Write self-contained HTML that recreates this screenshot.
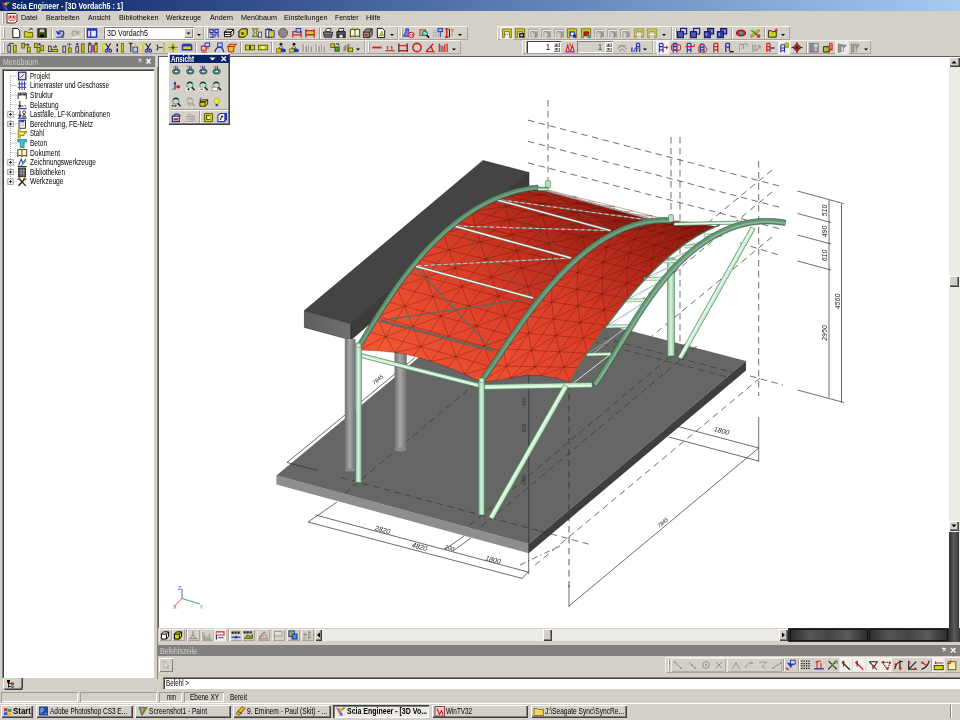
<!DOCTYPE html>
<html lang="de"><head><meta charset="utf-8"><title>Scia Engineer - [3D Vordach5 : 1]</title>
<style>
html,body{margin:0;padding:0;background:#d4d0c8;}
body{width:960px;height:720px;overflow:hidden;font-family:'Liberation Sans',sans-serif;font-size:8px;}
#screen{filter:blur(0.4px);position:relative;width:960px;height:720px;overflow:hidden;background:#d4d0c8;}
.t{position:absolute;white-space:pre;transform-origin:0 50%;line-height:1;display:inline-block;}
.raised{box-shadow:inset 1px 1px 0 #fff, inset -1px -1px 0 #808080;}
.sunken{box-shadow:inset 1px 1px 0 #808080, inset -1px -1px 0 #fff;}
.sep{position:absolute;width:1px;background:#a09c94;box-shadow:1px 0 0 #fff;}
.grip{position:absolute;width:2px;box-shadow:inset 1px 0 0 #fff, inset -1px 0 0 #a09c94;}
svg{position:absolute;overflow:visible;}
</style></head>
<body>
<div id="screen">
<div style="position:absolute;left:0px;top:0px;width:960px;height:11px;background:linear-gradient(90deg,#0a246a,#a6caf0);"></div>
<svg style="left:1px;top:1px" width="10" height="10" viewBox="0 0 10 10"><path d="M0 1l3 1 2 3z" fill="#e83020"/><path d="M3 2l4-1 -2 4z" fill="#f0c020"/><path d="M7 1l3 0-5 4z" fill="#30a030"/><path d="M5 5l-1 4 3 0z" fill="#3060e0"/><path d="M0 1l4 8 1-4z" fill="#c02080" opacity=".7"/></svg>
<span class="t" style="left:12px;top:1.7px;font-size:8.3px;font-weight:bold;color:#fff;transform:scaleX(0.855);">Scia Engineer - [3D Vordach5 : 1]</span>
<div style="position:absolute;left:0px;top:11px;width:960px;height:14px;background:#d4d0c8;"></div>
<div class="grip" style="left:2px;top:13px;height:11px"></div>
<svg style="left:6px;top:12px" width="12" height="12" viewBox="0 0 12 12"><path d="M1 1.500h9l1 1v6.500l-2 2h-8z" fill="#fff" stroke="#602020" stroke-width="1"/><path d="M3 3.500v4l1.500 1.500 1.500-1.500 1.500 1.500 1.500-1.500v-4M4.500 3.500v3M6 3.500v3M7.500 3.500v3" stroke="#c82020" stroke-width="1" fill="none"/></svg>
<span class="t" style="left:21px;top:14.2px;font-size:8.1px;font-weight:normal;color:#000;transform:scaleX(0.873);">Datei</span>
<span class="t" style="left:45.5px;top:14.2px;font-size:8.1px;font-weight:normal;color:#000;transform:scaleX(0.856);">Bearbeiten</span>
<span class="t" style="left:87.5px;top:14.2px;font-size:8.1px;font-weight:normal;color:#000;transform:scaleX(0.848);">Ansicht</span>
<span class="t" style="left:118.5px;top:14.2px;font-size:8.1px;font-weight:normal;color:#000;transform:scaleX(0.896);">Bibliotheken</span>
<span class="t" style="left:166px;top:14.2px;font-size:8.1px;font-weight:normal;color:#000;transform:scaleX(0.858);">Werkzeuge</span>
<span class="t" style="left:209.5px;top:14.2px;font-size:8.1px;font-weight:normal;color:#000;transform:scaleX(0.881);">Ändern</span>
<span class="t" style="left:240.5px;top:14.2px;font-size:8.1px;font-weight:normal;color:#000;transform:scaleX(0.889);">Menübaum</span>
<span class="t" style="left:284px;top:14.2px;font-size:8.1px;font-weight:normal;color:#000;transform:scaleX(0.895);">Einstellungen</span>
<span class="t" style="left:335px;top:14.2px;font-size:8.1px;font-weight:normal;color:#000;transform:scaleX(0.856);">Fenster</span>
<span class="t" style="left:366px;top:14.2px;font-size:8.1px;font-weight:normal;color:#000;transform:scaleX(0.895);">Hilfe</span>
<div style="position:absolute;left:0px;top:26px;width:204px;height:14px;background:#d4d0c8;box-shadow:inset 1px 1px 0 #f4f2ec, inset -1px -1px 0 #a8a49c;"></div>
<div class="grip" style="left:3px;top:28px;height:10px"></div>
<div style="position:absolute;left:204px;top:26px;width:194px;height:14px;background:#d4d0c8;box-shadow:inset 1px 1px 0 #f4f2ec, inset -1px -1px 0 #a8a49c;"></div>
<div class="grip" style="left:207px;top:28px;height:10px"></div>
<div style="position:absolute;left:398px;top:26px;width:70px;height:14px;background:#d4d0c8;box-shadow:inset 1px 1px 0 #f4f2ec, inset -1px -1px 0 #a8a49c;"></div>
<div class="grip" style="left:401px;top:28px;height:10px"></div>
<div style="position:absolute;left:497px;top:26px;width:175px;height:14px;background:#d4d0c8;box-shadow:inset 1px 1px 0 #f4f2ec, inset -1px -1px 0 #a8a49c;"></div>
<div class="grip" style="left:500px;top:28px;height:10px"></div>
<div style="position:absolute;left:672px;top:26px;width:118px;height:14px;background:#d4d0c8;box-shadow:inset 1px 1px 0 #f4f2ec, inset -1px -1px 0 #a8a49c;"></div>
<div class="grip" style="left:675px;top:28px;height:10px"></div>
<div style="position:absolute;left:0px;top:40px;width:365px;height:14px;background:#d4d0c8;box-shadow:inset 1px 1px 0 #f4f2ec, inset -1px -1px 0 #a8a49c;"></div>
<div class="grip" style="left:3px;top:42px;height:10px"></div>
<div style="position:absolute;left:365px;top:40px;width:96px;height:14px;background:#d4d0c8;box-shadow:inset 1px 1px 0 #f4f2ec, inset -1px -1px 0 #a8a49c;"></div>
<div class="grip" style="left:368px;top:42px;height:10px"></div>
<div style="position:absolute;left:522px;top:40px;width:131px;height:14px;background:#d4d0c8;box-shadow:inset 1px 1px 0 #f4f2ec, inset -1px -1px 0 #a8a49c;"></div>
<div class="grip" style="left:525px;top:42px;height:10px"></div>
<div style="position:absolute;left:653px;top:40px;width:218px;height:14px;background:#d4d0c8;box-shadow:inset 1px 1px 0 #f4f2ec, inset -1px -1px 0 #a8a49c;"></div>
<div class="grip" style="left:656px;top:42px;height:10px"></div>
<div class="sep" style="left:51px;top:28px;height:11px"></div>
<div class="sep" style="left:84px;top:28px;height:11px"></div>
<div class="sep" style="left:319px;top:28px;height:11px"></div>
<div class="sep" style="left:731px;top:28px;height:11px"></div>
<div class="sep" style="left:764px;top:28px;height:11px"></div>
<div style="position:absolute;left:104px;top:27px;width:90px;height:12px;background:#fff;box-shadow:inset 1px 1px 0 #808080, inset -1px -1px 0 #fff;"></div>
<div style="position:absolute;left:184px;top:28px;width:9px;height:10px;background:#d4d0c8;box-shadow:inset 1px 1px 0 #fff, inset -1px -1px 0 #808080;"></div>
<span class="t" style="left:107px;top:29px;font-size:8.4px;font-weight:normal;color:#000;transform:scaleX(0.847);">3D Vordach5</span>
<div class="sep" style="left:195px;top:42px;height:11px"></div>
<div class="sep" style="left:240px;top:42px;height:11px"></div>
<div class="sep" style="left:271px;top:42px;height:11px"></div>
<div class="sep" style="left:777px;top:42px;height:11px"></div>
<div class="sep" style="left:806px;top:42px;height:11px"></div>
<div style="position:absolute;left:527px;top:41px;width:34px;height:12px;background:#fff;box-shadow:inset 1px 1px 0 #404040, inset -1px -1px 0 #fff;"></div>
<div style="position:absolute;left:553px;top:42px;width:7px;height:5px;background:#d4d0c8;box-shadow:inset 1px 1px 0 #fff, inset -1px -1px 0 #808080;"></div>
<div style="position:absolute;left:553px;top:47px;width:7px;height:5px;background:#d4d0c8;box-shadow:inset 1px 1px 0 #fff, inset -1px -1px 0 #808080;"></div>
<span class="t" style="left:546px;top:43px;font-size:8.4px;font-weight:normal;color:#000;transform:scaleX(0.856);">1</span>
<div style="position:absolute;left:577px;top:41px;width:36px;height:12px;background:#d4d0c8;box-shadow:inset 1px 1px 0 #808080, inset -1px -1px 0 #fff;"></div>
<div style="position:absolute;left:605px;top:42px;width:7px;height:5px;background:#d4d0c8;box-shadow:inset 1px 1px 0 #fff, inset -1px -1px 0 #808080;"></div>
<div style="position:absolute;left:605px;top:47px;width:7px;height:5px;background:#d4d0c8;box-shadow:inset 1px 1px 0 #fff, inset -1px -1px 0 #808080;"></div>
<span class="t" style="left:598px;top:43px;font-size:8.4px;font-weight:normal;color:#404040;transform:scaleX(0.856);">1</span>
<div style="position:absolute;left:0px;top:54px;width:960px;height:2px;background:#d4d0c8;"></div>
<div style="position:absolute;left:0px;top:56px;width:155px;height:11px;background:#808080;"></div>
<span class="t" style="left:3px;top:57.5px;font-size:8.4px;font-weight:normal;color:#d4d0c8;transform:scaleX(0.835);">Menübaum</span>
<div style="position:absolute;left:2px;top:69px;width:152px;height:609px;background:#fff;box-shadow:inset 1px 1px 0 #808080, inset 2px 2px 0 #404040, inset -1px -1px 0 #fff;"></div>
<div style="position:absolute;left:154px;top:67px;width:4px;height:612px;background:#d4d0c8;box-shadow:inset -1px 0 0 #808080;"></div>
<span class="t" style="left:29.5px;top:71.7px;font-size:8.3px;font-weight:normal;color:#000;transform:scaleX(0.774);">Projekt</span>
<span class="t" style="left:29.5px;top:81.3px;font-size:8.3px;font-weight:normal;color:#000;transform:scaleX(0.765);">Linienraster und Geschosse</span>
<span class="t" style="left:29.5px;top:90.9px;font-size:8.3px;font-weight:normal;color:#000;transform:scaleX(0.791);">Struktur</span>
<span class="t" style="left:29.5px;top:100.5px;font-size:8.3px;font-weight:normal;color:#000;transform:scaleX(0.772);">Belastung</span>
<span class="t" style="left:29.5px;top:110.10000000000001px;font-size:8.3px;font-weight:normal;color:#000;transform:scaleX(0.774);">Lastfälle, LF-Kombinationen</span>
<span class="t" style="left:29.5px;top:119.7px;font-size:8.3px;font-weight:normal;color:#000;transform:scaleX(0.790);">Berechnung, FE-Netz</span>
<span class="t" style="left:29.5px;top:129.29999999999998px;font-size:8.3px;font-weight:normal;color:#000;transform:scaleX(0.740);">Stahl</span>
<span class="t" style="left:29.5px;top:138.89999999999998px;font-size:8.3px;font-weight:normal;color:#000;transform:scaleX(0.784);">Beton</span>
<span class="t" style="left:29.5px;top:148.5px;font-size:8.3px;font-weight:normal;color:#000;transform:scaleX(0.793);">Dokument</span>
<span class="t" style="left:29.5px;top:158.09999999999997px;font-size:8.3px;font-weight:normal;color:#000;transform:scaleX(0.795);">Zeichnungswerkzeuge</span>
<span class="t" style="left:29.5px;top:167.7px;font-size:8.3px;font-weight:normal;color:#000;transform:scaleX(0.774);">Bibliotheken</span>
<span class="t" style="left:29.5px;top:177.29999999999998px;font-size:8.3px;font-weight:normal;color:#000;transform:scaleX(0.801);">Werkzeuge</span>
<div style="position:absolute;left:3px;top:678px;width:20px;height:12px;background:#d4d0c8;box-shadow:inset 1px 0 0 #fff, inset -1px -1px 0 #404040, inset -2px -2px 0 #808080;border-radius:0 0 2px 2px;"></div>
<div style="position:absolute;left:158px;top:56px;width:802px;height:572px;background:#fff;box-shadow:inset 1px 1px 0 #606060;"></div>
<div style="position:absolute;left:949px;top:57px;width:11px;height:571px;background:#edebe6;"></div>
<div style="position:absolute;left:949px;top:57px;width:11px;height:10px;background:#d4d0c8;box-shadow:inset 1px 1px 0 #fff, inset -1px -1px 0 #404040, inset -2px -2px 0 #808080;"></div>
<div style="position:absolute;left:949px;top:276px;width:10px;height:11px;background:#d4d0c8;box-shadow:inset 1px 1px 0 #fff, inset -1px -1px 0 #404040, inset -2px -2px 0 #808080;"></div>
<div style="position:absolute;left:949px;top:521px;width:10px;height:10px;background:#d4d0c8;box-shadow:inset 1px 1px 0 #fff, inset -1px -1px 0 #404040, inset -2px -2px 0 #808080;"></div>
<div style="position:absolute;left:949px;top:532px;width:10px;height:96px;background:linear-gradient(90deg,#303030,#5a5a5a 50%,#383838);"></div>
<div style="position:absolute;left:168px;top:53px;width:62px;height:72px;background:#d4d0c8;box-shadow:inset 1px 1px 0 #fff, inset -1px -1px 0 #404040, inset -2px -2px 0 #808080;"></div>
<div style="position:absolute;left:169.5px;top:54.5px;width:59.5px;height:8.5px;background:#0a246a;"></div>
<span class="t" style="left:171px;top:55px;font-size:8.4px;font-weight:bold;color:#fff;transform:scaleX(0.749);">Ansicht</span>
<div style="position:absolute;left:171px;top:108.5px;width:57px;height:1px;background:#a09c94;box-shadow:0 1px 0 #fff;"></div>
<div class="sep" style="left:198.5px;top:111px;height:12px"></div>
<div style="position:absolute;left:158px;top:628px;width:802px;height:14px;background:#d4d0c8;"></div>
<div style="position:absolute;left:321px;top:628.5px;width:467px;height:12px;background:#eceae5;"></div>
<div style="position:absolute;left:315px;top:629px;width:7px;height:12px;background:#d4d0c8;box-shadow:inset 1px 1px 0 #fff, inset -1px -1px 0 #404040, inset -2px -2px 0 #808080;"></div>
<div style="position:absolute;left:543px;top:629px;width:9px;height:12px;background:#d4d0c8;box-shadow:inset 1px 1px 0 #fff, inset -1px -1px 0 #404040, inset -2px -2px 0 #808080;"></div>
<div style="position:absolute;left:779px;top:629px;width:9px;height:12px;background:#d4d0c8;box-shadow:inset 1px 1px 0 #fff, inset -1px -1px 0 #404040, inset -2px -2px 0 #808080;"></div>
<div style="position:absolute;left:788px;top:628px;width:161px;height:14px;background:#2c2c2c;"></div>
<div style="position:absolute;left:791px;top:630px;width:76px;height:10px;background:linear-gradient(90deg,#2e2e2e,#565656 25%,#444 50%,#5a5a5a 75%,#2e2e2e);box-shadow:0 0 0 1px #141414;"></div>
<div style="position:absolute;left:870px;top:630px;width:77px;height:10px;background:linear-gradient(90deg,#2e2e2e,#565656 25%,#444 50%,#5a5a5a 75%,#2e2e2e);box-shadow:0 0 0 1px #141414;"></div>
<div style="position:absolute;left:949px;top:628px;width:11px;height:14px;background:linear-gradient(90deg,#303030,#5a5a5a 50%,#383838);"></div>
<div style="position:absolute;left:158.5px;top:628.5px;width:13px;height:12.5px;box-shadow:inset 1px 1px 0 #f0eee8, inset -1px -1px 0 #a8a49c;"></div>
<div style="position:absolute;left:171.5px;top:628.5px;width:13px;height:12.5px;box-shadow:inset 1px 1px 0 #f0eee8, inset -1px -1px 0 #a8a49c;"></div>
<div style="position:absolute;left:186.5px;top:628.5px;width:13px;height:12.5px;box-shadow:inset 1px 1px 0 #f0eee8, inset -1px -1px 0 #a8a49c;"></div>
<div style="position:absolute;left:200.5px;top:628.5px;width:13px;height:12.5px;box-shadow:inset 1px 1px 0 #f0eee8, inset -1px -1px 0 #a8a49c;"></div>
<div style="position:absolute;left:213.5px;top:628.5px;width:13px;height:12.5px;box-shadow:inset 1px 1px 0 #f0eee8, inset -1px -1px 0 #a8a49c;"></div>
<div style="position:absolute;left:229.5px;top:628.5px;width:13px;height:12.5px;box-shadow:inset 1px 1px 0 #f0eee8, inset -1px -1px 0 #a8a49c;"></div>
<div style="position:absolute;left:241.5px;top:628.5px;width:13px;height:12.5px;box-shadow:inset 1px 1px 0 #f0eee8, inset -1px -1px 0 #a8a49c;"></div>
<div style="position:absolute;left:256.5px;top:628.5px;width:13px;height:12.5px;box-shadow:inset 1px 1px 0 #f0eee8, inset -1px -1px 0 #a8a49c;"></div>
<div style="position:absolute;left:271.5px;top:628.5px;width:13px;height:12.5px;box-shadow:inset 1px 1px 0 #f0eee8, inset -1px -1px 0 #a8a49c;"></div>
<div style="position:absolute;left:286.5px;top:628.5px;width:13px;height:12.5px;box-shadow:inset 1px 1px 0 #f0eee8, inset -1px -1px 0 #a8a49c;"></div>
<div style="position:absolute;left:300.5px;top:628.5px;width:13px;height:12.5px;box-shadow:inset 1px 1px 0 #f0eee8, inset -1px -1px 0 #a8a49c;"></div>
<div class="sep" style="left:185.5px;top:630px;height:11px"></div>
<div class="sep" style="left:228px;top:630px;height:11px"></div>
<div style="position:absolute;left:158px;top:642px;width:802px;height:3px;background:#d4d0c8;"></div>
<div style="position:absolute;left:158px;top:645px;width:802px;height:11px;background:#808080;"></div>
<span class="t" style="left:160px;top:646.5px;font-size:8.4px;font-weight:normal;color:#d4d0c8;transform:scaleX(0.819);">Befehlszeile</span>
<div style="position:absolute;left:159px;top:658px;width:14px;height:14px;background:#d4d0c8;box-shadow:inset 1px 1px 0 #fff, inset -1px -1px 0 #808080;"></div>
<div style="position:absolute;left:665px;top:657px;width:295px;height:16px;background:#d4d0c8;box-shadow:inset 1px 1px 0 #f4f2ec, inset 0 -1px 0 #a8a49c;"></div>
<div class="grip" style="left:668px;top:659px;height:12px"></div>
<div style="position:absolute;left:671px;top:658px;width:55px;height:14px;background:#d4d0c8;box-shadow:inset 1px 1px 0 #eceae4, inset -1px -1px 0 #b0aca4;"></div>
<div style="position:absolute;left:727px;top:658px;width:55px;height:14px;background:#d4d0c8;box-shadow:inset 1px 1px 0 #eceae4, inset -1px -1px 0 #b0aca4;"></div>
<div class="sep" style="left:782.5px;top:659px;height:12px"></div>
<div class="sep" style="left:798px;top:659px;height:12px"></div>
<div class="sep" style="left:931px;top:659px;height:12px"></div>
<div style="position:absolute;left:163px;top:677px;width:797px;height:12px;background:#fff;box-shadow:inset 1px 1px 0 #808080, inset 2px 2px 0 #404040;"></div>
<span class="t" style="left:166px;top:678.8px;font-size:8.3px;font-weight:normal;color:#000;transform:scaleX(0.749);">Befehl &gt;</span>
<div style="position:absolute;left:0px;top:690px;width:960px;height:13px;background:#d4d0c8;"></div>
<div style="position:absolute;left:1px;top:692px;width:77px;height:10px;box-shadow:inset 1px 1px 0 #a09c94, inset -1px -1px 0 #fff;"></div>
<div style="position:absolute;left:80px;top:692px;width:77px;height:10px;box-shadow:inset 1px 1px 0 #a09c94, inset -1px -1px 0 #fff;"></div>
<div style="position:absolute;left:159px;top:692px;width:23px;height:10px;box-shadow:inset 1px 1px 0 #a09c94, inset -1px -1px 0 #fff;"></div>
<div style="position:absolute;left:184px;top:692px;width:40px;height:10px;box-shadow:inset 1px 1px 0 #a09c94, inset -1px -1px 0 #fff;"></div>
<span class="t" style="left:167px;top:693.3px;font-size:8.3px;font-weight:normal;color:#000;transform:scaleX(0.651);">mm</span>
<span class="t" style="left:189.5px;top:693.3px;font-size:8.3px;font-weight:normal;color:#000;transform:scaleX(0.776);">Ebene XY</span>
<span class="t" style="left:229.5px;top:693.3px;font-size:8.3px;font-weight:normal;color:#000;transform:scaleX(0.784);">Bereit</span>
<div style="position:absolute;left:0px;top:703px;width:960px;height:17px;background:#d4d0c8;box-shadow:inset 0 1px 0 #fff;"></div>
<div style="position:absolute;left:950px;top:705px;width:1px;height:13px;background:#808080;box-shadow:1px 0 0 #fff;"></div>
<div style="position:absolute;left:1px;top:705px;width:32px;height:13px;background:#d4d0c8;box-shadow:inset 1px 1px 0 #fff, inset -1px -1px 0 #404040, inset -2px -2px 0 #808080;"></div>
<span class="t" style="left:13px;top:707px;font-size:8.6px;font-weight:bold;color:#000;transform:scaleX(0.919);">Start</span>
<div style="position:absolute;left:36px;top:705px;width:97px;height:13px;background:#d4d0c8;box-shadow:inset 1px 1px 0 #fff, inset -1px -1px 0 #404040, inset -2px -2px 0 #808080;"></div>
<span class="t" style="left:50px;top:707.3px;font-size:8.4px;font-weight:normal;color:#000;transform:scaleX(0.769);">Adobe Photoshop CS3 E...</span>
<div style="position:absolute;left:135px;top:705px;width:96px;height:13px;background:#d4d0c8;box-shadow:inset 1px 1px 0 #fff, inset -1px -1px 0 #404040, inset -2px -2px 0 #808080;"></div>
<span class="t" style="left:149px;top:707.3px;font-size:8.4px;font-weight:normal;color:#000;transform:scaleX(0.788);">Screenshot1 - Paint</span>
<div style="position:absolute;left:233px;top:705px;width:98px;height:13px;background:#d4d0c8;box-shadow:inset 1px 1px 0 #fff, inset -1px -1px 0 #404040, inset -2px -2px 0 #808080;"></div>
<span class="t" style="left:247px;top:707.3px;font-size:8.4px;font-weight:normal;color:#000;transform:scaleX(0.796);">9. Eminem - Paul (Skit) - ...</span>
<div style="position:absolute;left:333px;top:705px;width:96px;height:13px;background:#eceae6;box-shadow:inset 1px 1px 0 #404040, inset 2px 2px 0 #808080, inset -1px -1px 0 #fff;"></div>
<span class="t" style="left:347px;top:707.3px;font-size:8.4px;font-weight:bold;color:#000;transform:scaleX(0.836);">Scia Engineer - [3D Vo...</span>
<div style="position:absolute;left:432px;top:705px;width:96px;height:13px;background:#d4d0c8;box-shadow:inset 1px 1px 0 #fff, inset -1px -1px 0 #404040, inset -2px -2px 0 #808080;"></div>
<span class="t" style="left:446px;top:707.3px;font-size:8.4px;font-weight:normal;color:#000;transform:scaleX(0.755);">WinTV32</span>
<div style="position:absolute;left:531px;top:705px;width:96px;height:13px;background:#d4d0c8;box-shadow:inset 1px 1px 0 #fff, inset -1px -1px 0 #404040, inset -2px -2px 0 #808080;"></div>
<span class="t" style="left:545px;top:707.3px;font-size:8.4px;font-weight:normal;color:#000;transform:scaleX(0.793);">J:\Seagate Sync\SyncRe...</span>
<svg style="left:0;top:0" width="960" height="720" viewBox="0 0 960 720"><g transform="translate(10.5 27.5) scale(0.92)"><path d="M2.5 1h5l2.5 2.5v7.5h-7.5z" fill="#fff" stroke="#000"/></g><g transform="translate(23.5 27.5) scale(0.92)"><path d="M1 4.5h3l1 1h5v5h-9z" fill="#d2d21e" stroke="#5c5c00"/><path d="M6 3l2-2 2 1" stroke="#000" fill="none"/></g><g transform="translate(36.5 27.5) scale(0.92)"><rect x="1.5" y="1.5" width="9" height="9" fill="#46561a" stroke="#000"/><rect x="3.5" y="2" width="5" height="3" fill="#c8c8c8"/><rect x="4" y="7.5" width="4" height="3" fill="#000"/></g><g transform="translate(55.5 27.5) scale(0.92)"><path d="M3 6.5a3 2.8 0 1 1 3 2.8M1 4l2 3.2 3-1.4" stroke="#2434b4" fill="none" stroke-width="1.4"/><path d="M1 10.5h8" stroke="#2434b4" stroke-width="1.2"/></g><g transform="translate(69.5 27.5) scale(0.92)"><path d="M9 6.5a3 2.8 0 1 0-3 2.8M11 4l-2 3.2-3-1.4" stroke="#a8a49c" fill="none" stroke-width="1.4"/><path d="M3 10.5h8" stroke="#fff" stroke-width="1"/></g><g transform="translate(86.5 27.5) scale(0.92)"><rect x="1" y="1.500" width="10" height="9" fill="#e4e6f6" stroke="#2434b4" stroke-width="1.500"/><path d="M1 2.500h10" stroke="#2434b4" stroke-width="2"/><path d="M4.500 3v7.500" stroke="#2434b4" stroke-width="1.200"/></g><g transform="translate(208.5 27.5) scale(0.92)"><path d="M1.5 2h3.5v3.5h-3.5zM7 2h3.5v3.5h-3.5zM1.500 7h3.5v3.500h-3.5M7 10.500v-3.500h3.500v3.500M5 3.5h2" stroke="#2434b4" fill="none" stroke-width="1.2"/></g><g transform="translate(223.5 27.5) scale(0.92)"><path d="M1 5l3-3h7l-3 3zM1 5h7v5h-7zM8 10l3-3v-5" fill="#fff" stroke="#000"/><path d="M1 7.500h7" stroke="#000"/></g><g transform="translate(237.5 27.5) scale(0.92)"><path d="M1.5 4l3-2.500h6v6l-3 3h-6z" fill="#d2d21e" stroke="#000"/><path d="M4 5h3v3h-3z" fill="#000" opacity=".6"/></g><g transform="translate(251.5 27.5) scale(0.92)"><path d="M1 1.500h6l-2 4 2 4.500h-6l2-4.500z" fill="#c8c8b0" stroke="#5c5c00"/><rect x="7.500" y="5" width="3.500" height="5.500" fill="#ddd" stroke="#555"/></g><g transform="translate(264.5 27.5) scale(0.92)"><rect x="1.500" y="2" width="6" height="8.500" fill="#fff" stroke="#000"/><rect x="4.500" y="3.500" width="6" height="7" fill="#d2d21e" stroke="#2434b4"/><rect x="3" y="1" width="3" height="2" fill="#2434b4"/></g><g transform="translate(277.5 27.5) scale(0.92)"><circle cx="6" cy="6" r="5" fill="#8c8484" stroke="#6c5c54"/><path d="M2 4l8 4M2 8l8-4M6 1v10" stroke="#a09088" stroke-width=".6"/></g><g transform="translate(291.5 27.5) scale(0.92)"><path d="M1.500 11v-6.500h9v6.500M1.500 8h9" stroke="#d42020" fill="none" stroke-width="1.400"/><rect x="5" y="1" width="5" height="4" fill="#b8c0f0" stroke="#2434b4"/></g><g transform="translate(304.5 27.5) scale(0.92)"><path d="M1.500 2v9M10.500 2v9" stroke="#d42020" stroke-width="1.400"/><path d="M1.500 3.500h9M1.500 8h9" stroke="#d42020" stroke-width="1.600"/><rect x="3" y="4.500" width="6" height="2.500" fill="#d2d21e"/></g><g transform="translate(322.5 27.5) scale(0.92)"><path d="M3 4.500l1.500-3.500h5l-1.500 3.500z" fill="#fff" stroke="#333"/><path d="M1 5h10l-1 5.500h-8z" fill="#8a8a8a" stroke="#222"/><path d="M2 8h8" stroke="#222"/></g><g transform="translate(335.5 27.5) scale(0.92)"><path d="M3 4l1-3h5l-.5 3z" fill="#fff" stroke="#333"/><path d="M1.500 4.500h9v6.500h-2v-3h-5v3h-2z" fill="#555" stroke="#111"/><rect x="4" y="8" width="4" height="3" fill="#fff" stroke="#333" stroke-width=".6"/></g><g transform="translate(349.5 27.5) scale(0.92)"><path d="M1 2.500q2.500-1.500 5 0q2.500-1.500 5 0v7.500q-2.500-1.500-5 0q-2.500-1.500-5 0z" fill="#f4f4e4" stroke="#5c5c00" stroke-width="1.200"/><path d="M6 2.500v7.500" stroke="#5c5c00"/></g><g transform="translate(362.5 27.5) scale(0.92)"><path d="M1 5l3-3.500h6.500v7l-3 2.500h-6.500z" fill="#909090" stroke="#222"/><path d="M1 5h6.500v6M7.500 5l3-3.500" stroke="#222" fill="none"/><rect x="2.500" y="7" width="3" height="2.500" fill="#d42020"/></g><g transform="translate(375.5 27.5) scale(0.92)"><path d="M2 1h5.500l2.500 2.500v7.500h-8z" fill="#fff" stroke="#000"/><path d="M4 9l3-5 1.500 5z" fill="#d2d21e" stroke="#5c5c00" stroke-width=".6"/></g><g transform="translate(403.5 27.5) scale(0.92)"><path d="M2.500 1.500h3v3l2.500 5h-8l2.500-5z" fill="#7080e0" stroke="#2434b4"/><circle cx="8.500" cy="8" r="2.800" fill="#fff" stroke="#d42020" stroke-width="1.200"/><path d="M7 8h3M9 7l1 1-1 1" stroke="#d42020" fill="none"/></g><g transform="translate(418.5 27.5) scale(0.92)"><rect x="1.500" y="2.500" width="6" height="6" fill="#d8b088" stroke="#904820"/><circle cx="7" cy="6.500" r="2.600" fill="#80e0e0" stroke="#106060"/><path d="M9 8.500l2.500 2.500" stroke="#000" stroke-width="1.600"/></g><g transform="translate(432.5 27.5) scale(0.92)"><path d="M1.500 3v8M4 3v8M6.500 5v6" stroke="#909090" stroke-dasharray="1 1"/><rect x="6" y="1" width="5" height="3.500" fill="#a0b0f0" stroke="#2434b4"/><path d="M8.500 4.500v6" stroke="#2434b4"/></g><g transform="translate(443.5 27.5) scale(0.92)"><path d="M1.500 1.500h4M1.500 10.500h4M3.500 1.500v9" stroke="#d42020" stroke-width="1.600"/><path d="M6.500 1.500v9" stroke="#222" stroke-width="1.200"/><path d="M8.500 2.500q2-1.500 2 .5q0 1-1.200 1.500v1" stroke="#b06020" fill="none"/><circle cx="9.300" cy="7.500" r=".7" fill="#b06020"/></g><g transform="translate(501.5 27.5) scale(0.92)"><rect x="-1" y="-1" width="14" height="14" fill="#f4f2ec"/><path d="M1 11v-9.500h10v9.500h-2.200v-6.500h-5.600v6.500z" fill="#d2d21e" stroke="#5c5c00" stroke-width=".8"/><path d="M4 7.500h6" stroke="#444" stroke-dasharray="1 1"/></g><g transform="translate(514.5 27.5) scale(0.92)"><path d="M1 11v-9.500h10v9.500h-2.200v-6.500h-5.600v6.500z" fill="#d2d21e" stroke="#5c5c00" stroke-width=".8"/><rect x="5" y="6" width="5.500" height="5" fill="#222"/><rect x="6.500" y="7.500" width="2.500" height="2" fill="#ccc"/></g><g transform="translate(527.5 27.5) scale(0.92)"><path d="M1.500 11v-9h9v9M3.500 11v-6.500h5v6.500" fill="none" stroke="#8c8880" stroke-width="1"/><path d="M2.500 12v-9h9" fill="none" stroke="#fff" stroke-width=".8"/><path d="M6 6h4v3h-2v2" stroke="#8c8880" fill="none"/></g><g transform="translate(540.5 27.5) scale(0.92)"><path d="M1.500 11v-9h9v9M3.500 11v-6.500h5v6.500" fill="none" stroke="#8c8880" stroke-width="1"/><path d="M2.500 12v-9h9" fill="none" stroke="#fff" stroke-width=".8"/><path d="M6 6h4v3h-2v2" stroke="#8c8880" fill="none"/></g><g transform="translate(553.5 27.5) scale(0.92)"><path d="M1.500 11v-9h9v9M3.500 11v-6.500h5v6.500" fill="none" stroke="#8c8880" stroke-width="1"/><path d="M2.500 12v-9h9" fill="none" stroke="#fff" stroke-width=".8"/><path d="M6 6h4v3h-2v2" stroke="#8c8880" fill="none"/></g><g transform="translate(566.5 27.5) scale(0.92)"><path d="M1 11v-9.500h10v9.500h-2.200v-6.500h-5.600v6.500z" fill="#d2d21e" stroke="#5c5c00" stroke-width=".8"/><rect x="4.500" y="5" width="4" height="4" fill="#fff" stroke="#2434b4"/><rect x="7" y="7.500" width="3.500" height="3.500" fill="#2434b4"/></g><g transform="translate(580.5 27.5) scale(0.92)"><path d="M1 11v-9.500h10v9.500h-2.200v-6.500h-5.600v6.500z" fill="#d2d21e" stroke="#5c5c00" stroke-width=".8"/><rect x="4.500" y="5" width="4" height="4" fill="#d42020" stroke="#800"/><circle cx="9" cy="9.500" r="1.800" fill="#20a0d0"/></g><g transform="translate(593.5 27.5) scale(0.92)"><path d="M1.500 11v-9h9v9M3.500 11v-6.500h5v6.500" fill="none" stroke="#8c8880" stroke-width="1"/><path d="M2.500 12v-9h9" fill="none" stroke="#fff" stroke-width=".8"/><path d="M6 6h4v3h-2v2" stroke="#8c8880" fill="none"/></g><g transform="translate(606.5 27.5) scale(0.92)"><path d="M1.500 11v-9h9v9M3.500 11v-6.500h5v6.500" fill="none" stroke="#8c8880" stroke-width="1"/><path d="M2.500 12v-9h9" fill="none" stroke="#fff" stroke-width=".8"/><path d="M6 6h4v3h-2v2" stroke="#8c8880" fill="none"/></g><g transform="translate(619.5 27.5) scale(0.92)"><path d="M1.500 11v-9h9v9M3.500 11v-6.500h5v6.500" fill="none" stroke="#8c8880" stroke-width="1"/><path d="M2.500 12v-9h9" fill="none" stroke="#fff" stroke-width=".8"/><path d="M6 6h4v3h-2v2" stroke="#8c8880" fill="none"/></g><g transform="translate(633.5 27.5) scale(0.92)"><path d="M1 11v-9.500h10v9.500h-2.200v-6.500h-5.600v6.500z" fill="#c8c850" stroke="#8c8c40" stroke-width=".8"/><path d="M3 7.500h6" stroke="#f4f4c0" stroke-width="1.500"/></g><g transform="translate(646.5 27.5) scale(0.92)"><path d="M1 11v-9.500h10v9.500h-2.200v-6.500h-5.600v6.500z" fill="#c8c850" stroke="#8c8c40" stroke-width=".8"/><path d="M3 7.500h6" stroke="#f4f4c0" stroke-width="1.500"/></g><g transform="translate(676.5 27.5) scale(0.92)"><rect x="4.500" y="1" width="6.500" height="6" fill="#c8cce8" stroke="#182070" stroke-width="1.300"/><rect x="1" y="4.500" width="6.500" height="6.500" fill="#5058a8" stroke="#182070" stroke-width="1.300"/></g><g transform="translate(689.5 27.5) scale(0.92)"><rect x="4.500" y="1" width="6.500" height="6" fill="#c8cce8" stroke="#182070" stroke-width="1.300"/><rect x="1" y="4.500" width="6.500" height="6.500" fill="#5058a8" stroke="#182070" stroke-width="1.300"/></g><g transform="translate(703.5 27.5) scale(0.92)"><rect x="4.500" y="1" width="6.500" height="6" fill="#5058a8" stroke="#182070" stroke-width="1.300"/><rect x="1" y="4.500" width="6.500" height="6.500" fill="#3840a0" stroke="#182070" stroke-width="1.300"/><path d="M3 6v3M9 2.500v3" stroke="#c0c8ff"/></g><g transform="translate(716.5 27.5) scale(0.92)"><rect x="4.500" y="1" width="6.500" height="6" fill="#5058a8" stroke="#182070" stroke-width="1.300"/><rect x="1" y="4.500" width="6.500" height="6.500" fill="#3840a0" stroke="#182070" stroke-width="1.300"/><path d="M3 6v3M9 2.500v3" stroke="#c0c8ff"/></g><g transform="translate(735.5 27.5) scale(0.92)"><ellipse cx="6" cy="6" rx="5" ry="3.200" fill="#d42020" stroke="#901010"/><ellipse cx="6" cy="6" rx="2.600" ry="1.600" fill="#38a8a0"/></g><g transform="translate(749.5 27.5) scale(0.92)"><path d="M1 9l9-7 1 2-9 7z" fill="#d2d21e" stroke="#5c5c00" stroke-width=".7"/><path d="M2 3l8 6" stroke="#50a030" stroke-width="1.800"/><path d="M6 6l5 4.500M11 10.500v-3M11 10.500h-3" stroke="#d42020" stroke-width="1.300" fill="none"/></g><g transform="translate(767.5 27.5) scale(0.92)"><path d="M1 3.500h3l1 1h4.500v6h-8.500z" fill="#d2d21e" stroke="#222"/><path d="M9.500 1v4M7.500 3h4" stroke="#d42020" stroke-width="1.300"/></g><path d="M390.0 34.0h4l-2.0 2.0z" fill="#000"/><path d="M458.0 34.0h4l-2.0 2.0z" fill="#000"/><path d="M662.0 34.0h4l-2.0 2.0z" fill="#000"/><path d="M781.0 34.0h4l-2.0 2.0z" fill="#000"/><path d="M186.5 32.5h4l-2.0 2.0z" fill="#000"/><path d="M197.0 34.0h4l-2.0 2.0z" fill="#000"/><g transform="translate(6.5 42.0) scale(0.92)"><rect x="1.500" y="3.500" width="3" height="7.500" fill="#d4d0c8" stroke="#333"/><rect x="7.500" y="3.500" width="3" height="7.500" fill="#d2d21e" stroke="#5c5c00"/><path d="M3 3.500v-2h5" stroke="#333" fill="none"/></g><g transform="translate(20.5 42.0) scale(0.92)"><rect x="1.500" y="1.500" width="3" height="5" fill="#d2d21e" stroke="#5c5c00"/><rect x="7.500" y="5.500" width="3" height="5.500" fill="#d2d21e" stroke="#5c5c00"/><path d="M5 3h4l-1.200-1.200M9 3l-1.200 1.200" stroke="#222" fill="none"/></g><g transform="translate(33.5 42.0) scale(0.92)"><rect x="1" y="1.500" width="3" height="4.500" fill="#d2d21e" stroke="#5c5c00"/><rect x="4" y="6" width="3" height="5" fill="#d2d21e" stroke="#5c5c00"/><rect x="8" y="4" width="3" height="5.500" fill="#d2d21e" stroke="#5c5c00"/><path d="M5 2.500h3M6.500 1v3" stroke="#2434b4" stroke-width="1.200"/></g><g transform="translate(47.5 42.0) scale(0.92)"><rect x="1" y="4.500" width="3" height="6" fill="#d4d0c8" stroke="#333"/><rect x="5" y="8" width="6" height="2.500" fill="#d2d21e" stroke="#5c5c00"/><path d="M6 5.500h4l-1.500-2" stroke="#222" fill="none"/></g><g transform="translate(61.5 42.0) scale(0.92)"><rect x="1.500" y="4.500" width="3" height="6.500" fill="#d4d0c8" stroke="#333"/><rect x="7.500" y="6.500" width="3" height="4.500" fill="#d2d21e" stroke="#5c5c00"/><path d="M6 2.500h5M8.500 1v5" stroke="#2434b4" stroke-dasharray="1.200 .8" stroke-width="1.200"/></g><g transform="translate(74.5 42.0) scale(0.92)"><rect x="1.500" y="5" width="3" height="6" fill="#d4d0c8" stroke="#333"/><rect x="7.500" y="2" width="3" height="9" fill="#d2d21e" stroke="#5c5c00"/><circle cx="3" cy="2.500" r="1.300" fill="#2434b4"/></g><g transform="translate(87.5 42.0) scale(0.92)"><rect x="1" y="3" width="3" height="8" fill="#d4d0c8" stroke="#333"/><rect x="4.500" y="3" width="2.500" height="8" fill="#c030c0"/><rect x="7.500" y="3" width="3" height="8" fill="#d2d21e" stroke="#5c5c00"/><path d="M1 1.500h3M8 1.500h3" stroke="#222" stroke-width="1.200"/></g><g transform="translate(101.5 42.0) scale(0.92)"><path d="M1.500 2v9M1.500 2h2.500" stroke="#d2d21e" stroke-width="2"/><path d="M4.500 1.500l4.500 7M10 1.500l-4.500 7" stroke="#222" stroke-width="1.100"/><circle cx="5.500" cy="9.500" r="1.500" fill="none" stroke="#2434b4" stroke-width="1.200"/><circle cx="9.500" cy="9.500" r="1.500" fill="none" stroke="#2434b4" stroke-width="1.200"/></g><g transform="translate(114.5 42.0) scale(0.92)"><path d="M3 2v3M3 7v4" stroke="#222" stroke-width="1.600"/><rect x="7.500" y="1.500" width="2.200" height="9.500" fill="#d2d21e" stroke="#5c5c00" stroke-width=".8"/></g><g transform="translate(127.5 42.0) scale(0.92)"><path d="M1.500 1.500h4M3.500 1.500v9.500" stroke="#333" stroke-width="1.300"/><rect x="6" y="5.500" width="5" height="5.500" fill="#d4d0c8" stroke="#2434b4"/><path d="M8.500 1.500v4" stroke="#d2d21e" stroke-width="2"/></g><g transform="translate(141.5 42.0) scale(0.92)"><path d="M1.500 2v9M1.500 2h2.500" stroke="#d2d21e" stroke-width="2"/><path d="M4.500 1.500l4.500 7M10 1.500l-4.500 7" stroke="#222" stroke-width="1.100"/><circle cx="5.500" cy="9.500" r="1.500" fill="none" stroke="#2434b4" stroke-width="1.200"/><circle cx="9.500" cy="9.500" r="1.500" fill="none" stroke="#2434b4" stroke-width="1.200"/></g><g transform="translate(154.5 42.0) scale(0.92)"><path d="M2.500 3l1.500 3-1.500 3M10 1.500v9.500" stroke="#222" stroke-width="1.200" fill="none"/><path d="M5 6h4" stroke="#2434b4" stroke-width="1.200"/><rect x="9" y="2" width="2" height="9" fill="#d2d21e"/></g><g transform="translate(167.5 42.0) scale(0.92)"><path d="M6 1v10M1 6h10M2.500 2.500l7 7M9.500 2.500l-7 7" stroke="#d2d21e" stroke-width="1.800"/><path d="M6 1v10M1 6h10" stroke="#5c5c00" stroke-width=".6"/><circle cx="6" cy="6" r="1.500" fill="#2434b4"/></g><g transform="translate(181.5 42.0) scale(0.92)"><rect x="1" y="4" width="10" height="4.500" fill="#d2d21e" stroke="#2434b4" stroke-width="1.600"/><path d="M1 2.500h10" stroke="#2434b4" stroke-width="1.400"/></g><g transform="translate(199.5 42.0) scale(0.92)"><path d="M2 9h5v-4.500h-5zM7 6.500h3" stroke="#d42020" fill="none" stroke-width="1.200"/><rect x="6" y="1" width="5" height="4" fill="#c0c8f4" stroke="#2434b4"/><path d="M2 11h6" stroke="#d42020"/></g><g transform="translate(213.5 42.0) scale(0.92)"><rect x="4.500" y="1" width="5" height="4.500" fill="#c0c8f4" stroke="#2434b4"/><path d="M1.500 11q1-5.500 5-5.500q4 0 4.500 5.500" stroke="#2434b4" fill="none" stroke-width="1.300"/></g><g transform="translate(226.5 42.0) scale(0.92)"><path d="M1.500 5l2-2.500h7l-2 2.500zM1.500 5h7l-1 5.500h-5z" fill="#d2d21e" stroke="#d42020" stroke-width="1.100"/></g><g transform="translate(244.5 42.0) scale(0.92)"><rect x="1" y="3.500" width="4.500" height="5" fill="#d2d21e" stroke="#5c5c00"/><rect x="6.500" y="3.500" width="4.500" height="5" fill="#d2d21e" stroke="#5c5c00"/><circle cx="6" cy="6" r="1" fill="#222"/></g><g transform="translate(257.5 42.0) scale(0.92)"><rect x="1" y="3.500" width="10" height="5" fill="#d2d21e" stroke="#5c5c00"/><rect x="4.500" y="4.500" width="3" height="3" fill="#f4f4a0"/></g><g transform="translate(275.5 42.0) scale(0.92)"><circle cx="6" cy="2.500" r="1.600" fill="#222"/><path d="M3.500 7q2.500-4 5 0z" fill="#fff" stroke="#222" stroke-width=".7"/><rect x="1" y="7.500" width="5" height="3.500" fill="#d2d21e" stroke="#5c5c00" stroke-width=".7"/><rect x="6" y="7.500" width="5" height="3.500" fill="#2434b4"/></g><g transform="translate(288.5 42.0) scale(0.92)"><circle cx="6" cy="2.500" r="1.600" fill="#222"/><path d="M3.500 7q2.500-4 5 0z" fill="#fff" stroke="#222" stroke-width=".7"/><rect x="1" y="7.500" width="5" height="3.500" fill="#d2d21e" stroke="#5c5c00" stroke-width=".7"/><rect x="6" y="7.500" width="5" height="3.500" fill="#2434b4"/></g><g transform="translate(301.5 42.0) scale(0.92)"><path d="M2 2v9M5 4v7M8 3v8M10.500 5v6" stroke="#9c988e" stroke-width="1.600"/><path d="M3 2v9M9 3v8" stroke="#fff" stroke-width=".7"/></g><g transform="translate(314.5 42.0) scale(0.92)"><path d="M2 2v9M5 4v7M8 3v8M10.500 5v6" stroke="#9c988e" stroke-width="1.600"/><path d="M3 2v9M9 3v8" stroke="#fff" stroke-width=".7"/></g><g transform="translate(329.5 42.0) scale(0.92)"><rect x="1.500" y="2" width="4" height="4" fill="#d2d21e" stroke="#5c5c00"/><rect x="6" y="5.500" width="4.500" height="4.500" fill="#50a030" stroke="#205010"/><path d="M7 2h3v2" stroke="#222" fill="none"/></g><g transform="translate(342.5 42.0) scale(0.92)"><path d="M1.500 10.500v-5l2-2v5zM5 10.500v-7l2-1.500v7z" fill="#9c988e" stroke="#666" stroke-width=".6"/><rect x="6.500" y="6.500" width="4.500" height="4" fill="#d2d21e" stroke="#5c5c00"/></g><g transform="translate(371.5 42.0) scale(0.92)"><path d="M1 6h10" stroke="#d42020" stroke-width="2"/></g><g transform="translate(384.5 42.0) scale(0.92)"><path d="M1 9.500h10" stroke="#d42020" stroke-width="1.200"/><path d="M3.500 4.500v4M8 4.500v4M2.500 5.500l1-1M7 5.500l1-1" stroke="#d42020" stroke-width="1.100" fill="none"/></g><g transform="translate(397.5 42.0) scale(0.92)"><path d="M1.500 1.500v9.500M10.500 1.500v9.500" stroke="#222" stroke-width="1.300"/><path d="M1.500 4h9M1.500 9.500h9" stroke="#d42020" stroke-width="1.500"/></g><g transform="translate(411.5 42.0) scale(0.92)"><circle cx="6" cy="6" r="4.500" fill="none" stroke="#d42020" stroke-width="1.700"/></g><g transform="translate(424.5 42.0) scale(0.92)"><path d="M1.500 10.500h9.500M1.500 10.500l8-8.500M7 4.500l2.500 6" stroke="#d42020" stroke-width="1.500" fill="none"/></g><g transform="translate(437.5 42.0) scale(0.92)"><path d="M2 1.500v9.500M5 4v7M8 2.500v8.500M10.500 1.500v9.500" stroke="#d42020" stroke-width="1.300"/><path d="M3.500 3v8M6.500 5v6" stroke="#888" stroke-width="1"/></g><g transform="translate(564.5 42.0) scale(0.92)"><path d="M1.500 10.500l2-7 2 7zM6.500 10.500l2-7 2 7z" fill="none" stroke="#d42020" stroke-width="1.200"/><path d="M1 10.500h10" stroke="#c030c0" stroke-width="1.400"/><path d="M6 1v4" stroke="#d42020"/></g><g transform="translate(616.5 42.0) scale(0.92)"><path d="M1 7.500l5-4 5 4M2.500 10.500l3.500-3 3.500 3" fill="none" stroke="#9c988e" stroke-width="1.200"/><path d="M2 4h8" stroke="#9c988e"/></g><g transform="translate(630.5 42.0) scale(0.92)"><path d="M1.500 6v5" stroke="#2434b4" stroke-width="1.300"/><path d="M3.500 11l2-5" stroke="#2434b4"/><path d="M6.500 1.500v9.500M10 1.500v9.500M6.500 1.500h3.500M6.500 5h3.500" stroke="#2434b4" stroke-width="1.200" fill="none"/><path d="M8 6.500v4" stroke="#222" stroke-dasharray="1 1"/></g><g transform="translate(657.5 42.0) scale(0.92)"><rect x="-1" y="-1" width="14" height="14" fill="#f4f2ec"/><path d="M2 1.500v10M6 1.500v10M2 1.500h4M2 5h4M2 8.500h4" stroke="#2434b4" stroke-width="1.300" fill="none"/><path d="M7 6h4M9.500 4.500l1.500 1.500-1.500 1.500" stroke="#d42020" fill="none" stroke-width="1.100"/></g><g transform="translate(670.5 42.0) scale(0.92)"><path d="M3 1.500v10M7 1.500v10M3 1.500h4M3 5h4M3 8.500h4" stroke="#2434b4" stroke-width="1.300" fill="none"/><rect x="1" y="3" width="10" height="6" rx="2" fill="none" stroke="#d42020" stroke-width="1.100"/></g><g transform="translate(684.5 42.0) scale(0.92)"><path d="M3 1.500v10M7 1.500v10M3 1.500h4M3 5h4M3 8.500h4" stroke="#2434b4" stroke-width="1.300" fill="none"/><path d="M1 5h10M10.500 2v3" stroke="#d42020" stroke-width="1.100"/></g><g transform="translate(697.5 42.0) scale(0.92)"><path d="M3 2.500v9M7 2.500v9M3 2.500h4M3 5.500h4M3 8.500h4" stroke="#2434b4" stroke-width="1.300" fill="none"/><path d="M1.500 11v-6q3.500-6 7 0l2 3-2 3z" fill="none" stroke="#d42020" stroke-width="1"/></g><g transform="translate(710.5 42.0) scale(0.92)"><path d="M3.500 1.500v10M8 1.500v10M3.500 1.500h4.500M3.500 5h4.500M3.500 8.500h4.500" stroke="#d42020" stroke-width="1.300" fill="none"/></g><g transform="translate(723.5 42.0) scale(0.92)"><path d="M2.500 1.500v9.500M2.500 1.500h4v4h-4M6.500 5.500v4" stroke="#2434b4" stroke-width="1.400" fill="none"/><path d="M6.500 10.500h4.500" stroke="#222" stroke-width="1.600"/></g><g transform="translate(737.5 42.0) scale(0.92)"><path d="M2.500 2.500v8.500M2.500 2.500h4v4h-4" stroke="#9c988e" stroke-width="1.300" fill="none"/><path d="M7 2h3.500v3" stroke="#9c988e" fill="none"/><path d="M3.500 3.500v8" stroke="#fff" stroke-width=".6"/></g><g transform="translate(750.5 42.0) scale(0.92)"><path d="M2.500 2.500v8.500M5 2.500v8" stroke="#9c988e" stroke-width="1.300"/><path d="M6 9.500l4.500-5M7 4h3.500v3" stroke="#9c988e" fill="none" stroke-width="1.200"/></g><g transform="translate(764.5 42.0) scale(0.92)"><path d="M2.500 1.500v9.500M6 1.500v9.500M2.500 1.500h3.500M2.500 5h3.500M2.500 8.500h3.500" stroke="#d42020" stroke-width="1.300" fill="none"/><path d="M6.500 6.500h4.500" stroke="#2434b4" stroke-width="1.600"/></g><g transform="translate(778.5 42.0) scale(0.92)"><rect x="-1" y="-1.500" width="14" height="15" fill="#f4f2ec"/><path d="M2.500 3v8.500M6.500 3v8.500M2.500 3h4M2.500 6.500h4M2.500 9.500h4" stroke="#2434b4" stroke-width="1.300" fill="none"/><rect x="7" y="1" width="4" height="5" fill="#b8c020" stroke="#707010" stroke-width=".6"/></g><g transform="translate(791.5 42.0) scale(0.92)"><path d="M6 1.500l4.500 4.500-4.500 4.500-4.500-4.500z" fill="#d42020" stroke="#222" stroke-width=".8"/><circle cx="6" cy="6" r="1.500" fill="#222"/><path d="M6 0v2.500M6 9.500v2.500M0 6h2.500M9.500 6h2.500" stroke="#222"/></g><g transform="translate(808.5 42.0) scale(0.92)"><rect x="1.500" y="1.500" width="9" height="9.500" fill="#8c8c90" stroke="#70707a"/><rect x="6" y="2" width="4" height="4" fill="#d0d0d8"/><rect x="6.500" y="7" width="3" height="3" fill="#c0c0c8"/></g><g transform="translate(822.5 42.0) scale(0.92)"><path d="M1 5h6.500v6h-6.500z" fill="#a0a010" stroke="#303000"/><path d="M2.500 6.500l3 1.500-3 1.500z" fill="#50a030" stroke="#fff" stroke-width=".5"/><rect x="7" y="1" width="4" height="8" fill="#d42020"/><path d="M8 2.500h2M8 4.500h2M8 6.500h2" stroke="#fff" stroke-width=".8"/></g><g transform="translate(836.5 42.0) scale(0.92)"><rect x="-1.500" y="-1.500" width="15" height="15" fill="#ebe9e3"/><path d="M2 2v9.500l3-1v-7.500zM5 3l5.500 .5-3 3.500M8 7l-1 4" fill="#9a9890" stroke="#707068" stroke-width=".8"/></g><g transform="translate(849.5 42.0) scale(0.92)"><path d="M2 2v9.500l3-1v-7.500zM5 3l5.500 .5-3 3.500M8 7l-1 4" fill="#a8a6a0" stroke="#7c7c74" stroke-width=".8"/><path d="M6 1.500l2.500.3M9.500 1.800l-2.500 5" stroke="#7c7c74" stroke-dasharray="1 1"/></g><path d="M356.0 48.5h4l-2.0 2.0z" fill="#000"/><path d="M452.0 48.5h4l-2.0 2.0z" fill="#000"/><path d="M643.0 48.5h4l-2.0 2.0z" fill="#000"/><path d="M864.0 48.5h4l-2.0 2.0z" fill="#000"/><path d="M555.0 45.500h3l-1.500-1.500zM555.0 48.500h3l-1.500 1.500z" fill="#000"/><path d="M607.0 45.500h3l-1.500-1.500zM607.0 48.500h3l-1.500 1.500z" fill="#000"/><path d="M138 59.500h3M139.500 58.500v4M141 59v3" stroke="#d4d0c8" stroke-width=".9" fill="none"/><path d="M146.500 59l4 4.500M150.500 59l-4 4.500" stroke="#fff" stroke-width="1.300"/><path d="M10.500 76.0V181.6" stroke="#a0a0a0" stroke-width="1" stroke-dasharray="1 1"/><path d="M10.500 76.0H17" stroke="#a0a0a0" stroke-width="1" stroke-dasharray="1 1"/><path d="M10.500 85.6H17" stroke="#a0a0a0" stroke-width="1" stroke-dasharray="1 1"/><path d="M10.500 95.2H17" stroke="#a0a0a0" stroke-width="1" stroke-dasharray="1 1"/><path d="M10.500 104.8H17" stroke="#a0a0a0" stroke-width="1" stroke-dasharray="1 1"/><path d="M10.500 114.4H17" stroke="#a0a0a0" stroke-width="1" stroke-dasharray="1 1"/><rect x="7.800" y="111.7" width="5.400" height="5.400" fill="#fff" stroke="#808080" stroke-width=".8"/><path d="M9 114.4h3M10.500 112.9v3" stroke="#000" stroke-width=".8"/><path d="M10.500 124.0H17" stroke="#a0a0a0" stroke-width="1" stroke-dasharray="1 1"/><rect x="7.800" y="121.3" width="5.400" height="5.400" fill="#fff" stroke="#808080" stroke-width=".8"/><path d="M9 124.0h3M10.500 122.5v3" stroke="#000" stroke-width=".8"/><path d="M10.500 133.6H17" stroke="#a0a0a0" stroke-width="1" stroke-dasharray="1 1"/><path d="M10.500 143.2H17" stroke="#a0a0a0" stroke-width="1" stroke-dasharray="1 1"/><path d="M10.500 152.8H17" stroke="#a0a0a0" stroke-width="1" stroke-dasharray="1 1"/><path d="M10.500 162.4H17" stroke="#a0a0a0" stroke-width="1" stroke-dasharray="1 1"/><rect x="7.800" y="159.7" width="5.400" height="5.400" fill="#fff" stroke="#808080" stroke-width=".8"/><path d="M9 162.4h3M10.500 160.9v3" stroke="#000" stroke-width=".8"/><path d="M10.500 172.0H17" stroke="#a0a0a0" stroke-width="1" stroke-dasharray="1 1"/><rect x="7.800" y="169.3" width="5.400" height="5.400" fill="#fff" stroke="#808080" stroke-width=".8"/><path d="M9 172.0h3M10.500 170.5v3" stroke="#000" stroke-width=".8"/><path d="M10.500 181.6H17" stroke="#a0a0a0" stroke-width="1" stroke-dasharray="1 1"/><rect x="7.800" y="178.9" width="5.400" height="5.400" fill="#fff" stroke="#808080" stroke-width=".8"/><path d="M9 181.6h3M10.500 180.1v3" stroke="#000" stroke-width=".8"/><g transform="translate(16.9 70.9) scale(0.85)"><rect x="2" y="1.500" width="8.500" height="9" fill="#e8e8f8" stroke="#202060" stroke-width="1.400"/><path d="M4 8.500l4-4.500" stroke="#202060"/></g><g transform="translate(16.9 80.5) scale(0.85)"><path d="M3 1v10M6 1v10M9 1v10" stroke="#2434b4" stroke-width="1.100"/><path d="M1 4h10M1 8h10" stroke="#2434b4" stroke-width="1.100"/></g><g transform="translate(16.9 90.1) scale(0.85)"><path d="M1.500 10.500v-7h9.500v7M1.500 5.500h9.500M4 3.500v3M8.500 3.500v3" stroke="#222" stroke-width="1.100" fill="none"/></g><g transform="translate(16.9 99.7) scale(0.85)"><path d="M1 10.500h10.500" stroke="#2434b4" stroke-width="1.400"/><path d="M3.500 1.500v7M2 6.500l1.500 2.500 1.500-2.500" stroke="#222" stroke-width="1.200" fill="none"/><path d="M6 9v-2l1.500 1 1.500-1.500 1.500 1v1.500" stroke="#806020" fill="none"/></g><g transform="translate(16.9 109.3) scale(0.85)"><path d="M1 10.500h10.500" stroke="#2434b4" stroke-width="1.400"/><path d="M3.500 1.500v7M2 6.500l1.500 2.500 1.500-2.500" stroke="#222" stroke-width="1.200" fill="none"/><circle cx="8.500" cy="3.500" r="1.800" fill="none" stroke="#222"/><path d="M6.500 9l2-3.500 2 3.500z" fill="none" stroke="#222"/></g><g transform="translate(16.9 118.9) scale(0.85)"><rect x="2.500" y="1.500" width="7.500" height="9.500" fill="#fff" stroke="#222" stroke-width="1.100"/><rect x="4" y="1.500" width="4.500" height="2.500" fill="#2434b4"/><path d="M4 6h4.500M4 8h4.500" stroke="#aaa"/></g><g transform="translate(16.9 128.5) scale(0.85)"><path d="M2.500 1v10.500" stroke="#d2d21e" stroke-width="2.400"/><path d="M2.500 4.500h8.500M2.500 7.500h6" stroke="#d2d21e" stroke-width="1.800"/><path d="M1.500 1v10.500M4 1v2.500h7.500v2h-3v3h-4.500v3" stroke="#5c5c00" stroke-width=".7" fill="none"/></g><g transform="translate(16.9 138.1) scale(0.85)"><path d="M1 1.500h10.500v3h-3v6.500h-4.500v-6.500h-3z" fill="#30c8d8" stroke="#106878" stroke-width=".8"/></g><g transform="translate(16.9 147.7) scale(0.85)"><path d="M1 2.500q2.500-1.500 5 0q2.500-1.500 5.500 0v7.500q-3-1.500-5.500 0q-2.500-1.500-5 0z" fill="#f4f0d8" stroke="#5c4c00" stroke-width="1.200"/><path d="M6 2.500v7.500" stroke="#5c4c00"/></g><g transform="translate(16.9 157.3) scale(0.85)"><path d="M1 11h10.500" stroke="#222" stroke-width="1.300"/><path d="M2 10l3-8 2 5 3.500-5" stroke="#2434b4" stroke-width="1.200" fill="none"/><path d="M5 10l5.500-6" stroke="#50a030" stroke-width="1.400"/></g><g transform="translate(16.9 166.9) scale(0.85)"><rect x="2" y="1.500" width="8" height="10" fill="#555" stroke="#111"/><path d="M2 4.500h8M2 7.500h8M5 1.500v10M8 1.500v10" stroke="#aaa" stroke-width=".7"/></g><g transform="translate(16.9 176.5) scale(0.85)"><path d="M2 11l8-9" stroke="#222" stroke-width="1.800"/><path d="M2 2l8.500 9" stroke="#222" stroke-width="1.500"/><path d="M1 4l3-3M8 1.500l3 2.500" stroke="#a07820" stroke-width="2"/></g><path d="M8.500 681v6.500M8.500 683.500h3M8.500 686.500h3" stroke="#000" stroke-width=".8" fill="none"/><rect x="7" y="680" width="3" height="2.500" fill="#000"/><rect x="11" y="682.500" width="3" height="2.500" fill="#e02020"/><rect x="11" y="685.500" width="3" height="2.500" fill="#20a0c0"/><path d="M951.500 63.500h5l-2.500-2.800z" fill="#000"/><path d="M951.500 524.500h5l-2.500 2.800z" fill="#000"/><path d="M209.500 57.500h6l-3 3z" fill="#fff"/><path d="M221.500 56.500l4.500 4.500M226 56.500l-4.500 4.500" stroke="#fff" stroke-width="1.300"/><g transform="translate(171.1 65.0) scale(0.86)"><path d="M5 1v3.500M7 1v3.500" stroke="#2030c0" stroke-width="1"/><path d="M2 1.500l1.500 1" stroke="#d02020"/><ellipse cx="6" cy="7.500" rx="4.200" ry="3" fill="#30c0b0" stroke="#303030" stroke-width="1"/><rect x="4" y="6.500" width="4" height="2.500" fill="#e8f8f8" stroke="#303030" stroke-width=".6"/></g><g transform="translate(185.1 65.0) scale(0.86)"><path d="M5 1v3.500M7 1v3.500" stroke="#2030c0" stroke-width="1"/><path d="M2 1.500l1.500 1" stroke="#d02020"/><ellipse cx="6" cy="7.500" rx="4.200" ry="3" fill="#30c0b0" stroke="#303030" stroke-width="1"/><rect x="4" y="6.500" width="4" height="2.500" fill="#e8f8f8" stroke="#303030" stroke-width=".6"/></g><g transform="translate(198.2 65.0) scale(0.86)"><path d="M5 1v3.500M7 1v3.500" stroke="#2030c0" stroke-width="1"/><path d="M2 1.500l1.500 1" stroke="#d02020"/><ellipse cx="6" cy="7.500" rx="4.200" ry="3" fill="#30c0b0" stroke="#303030" stroke-width="1"/><rect x="4" y="6.500" width="4" height="2.500" fill="#e8f8f8" stroke="#303030" stroke-width=".6"/></g><g transform="translate(211.5 65.0) scale(0.86)"><path d="M5 1v3.500M7 1v3.500" stroke="#2030c0" stroke-width="1"/><path d="M2 1.500l1.500 1" stroke="#d02020"/><ellipse cx="6" cy="7.500" rx="4.200" ry="3" fill="#30c0b0" stroke="#303030" stroke-width="1"/><rect x="4" y="6.500" width="4" height="2.500" fill="#e8f8f8" stroke="#303030" stroke-width=".6"/></g><g transform="translate(171.1 80.8) scale(0.86)"><path d="M4.500 1v9.500" stroke="#2434b4" stroke-width="1.300"/><path d="M4.500 7.500l-3 3" stroke="#50a030" stroke-width="1.200"/><path d="M4.500 7h5" stroke="#d42020" stroke-width="1.300"/><circle cx="8.500" cy="7" r="2" fill="#d42020"/><circle cx="4.500" cy="3" r="1.400" fill="#2434b4"/></g><g transform="translate(185.1 80.8) scale(0.86)"><circle cx="5.500" cy="4.800" r="3.600" fill="none" stroke="#38b0a0" stroke-width="1.300"/><path d="M2.500 3.500a3.600 3.600 0 0 1 6 0" stroke="#202020" stroke-width="1.300" fill="none"/><path d="M8 7.500l3 3.500" stroke="#202020" stroke-width="1.700"/><rect x="1.500" y="8" width="5" height="3.500" fill="#fff"/><path d="M2.500 9.800h3M4 8.500v2.600" stroke="#000" stroke-width=".9"/></g><g transform="translate(198.2 80.8) scale(0.86)"><circle cx="5.500" cy="4.800" r="3.600" fill="none" stroke="#38b0a0" stroke-width="1.300"/><path d="M2.500 3.500a3.600 3.600 0 0 1 6 0" stroke="#202020" stroke-width="1.300" fill="none"/><path d="M8 7.500l3 3.500" stroke="#202020" stroke-width="1.700"/><rect x="1.500" y="8" width="5" height="3.500" fill="#fff"/><path d="M2.500 9.800h3" stroke="#000" stroke-width=".9"/></g><g transform="translate(211.5 80.8) scale(0.86)"><circle cx="5.500" cy="4.800" r="3.600" fill="none" stroke="#38b0a0" stroke-width="1.300"/><path d="M2.500 3.500a3.600 3.600 0 0 1 6 0" stroke="#202020" stroke-width="1.300" fill="none"/><path d="M8 7.500l3 3.500" stroke="#202020" stroke-width="1.700"/><rect x="1" y="7.500" width="6" height="4" fill="#fff" stroke="#404040" stroke-width=".7" stroke-dasharray="1 .6"/></g><g transform="translate(171.1 96.8) scale(0.86)"><circle cx="5.500" cy="4.800" r="3.600" fill="none" stroke="#38b0a0" stroke-width="1.300"/><path d="M2.500 3.500a3.600 3.600 0 0 1 6 0" stroke="#202020" stroke-width="1.300" fill="none"/><path d="M8 7.500l3 3.500" stroke="#202020" stroke-width="1.700"/><path d="M1 10.500h5M1 10.500l1.200-1.200M1 10.500l1.200 1.200M6 10.500l-1.200-1.200M6 10.500l-1.200 1.200" stroke="#000" stroke-width=".7" fill="none"/></g><g transform="translate(185.1 96.8) scale(0.86)"><circle cx="5.500" cy="4.800" r="3.600" fill="none" stroke="#b8b4ac" stroke-width="1.300"/><path d="M2.500 3.500a3.600 3.600 0 0 1 6 0" stroke="#a8a49c" stroke-width="1.300" fill="none"/><path d="M8 7.500l3 3.500" stroke="#a8a49c" stroke-width="1.700"/><path d="M4 6v5M6.500 6v5" stroke="#a0a0a0"/></g><g transform="translate(198.2 96.8) scale(0.86)"><path d="M2 6l3-2.500h6l-3 2.500zM2 6h6v5h-6zM8 11l3-2.500v-5" fill="#d2d21e" stroke="#202000" stroke-width="1"/><path d="M3 1v4" stroke="#2434b4"/><path d="M1 3.500l3 1.500" stroke="#d42020"/></g><g transform="translate(211.5 96.8) scale(0.86)"><path d="M6 1.500a3 3 0 0 1 2 5.300v1.700h-4v-1.700a3 3 0 0 1 2-5.300z" fill="#f4f020" stroke="#a09000" stroke-width=".7"/><rect x="4.800" y="8.500" width="2.400" height="2.500" fill="#2434b4"/></g><g transform="translate(171.1 112.2) scale(0.86)"><rect x="1.500" y="4.500" width="8" height="6.500" fill="#e8e0d0" stroke="#202070" stroke-width="1.300"/><path d="M3 4.500q3-5 8 0" stroke="#2434b4" fill="none" stroke-width="1.300"/><rect x="3" y="7" width="5" height="2.500" fill="#d42020"/></g><g transform="translate(185.1 112.2) scale(0.86)"><rect x="2.500" y="5" width="8" height="6" fill="none" stroke="#a8a49c" stroke-width="1.200"/><path d="M2 5q3-5 7-1M5 5v6M8 5v6M2.500 8h8" stroke="#a8a49c" fill="none"/><path d="M3.500 6v6h8" stroke="#fff" stroke-width=".6" fill="none"/></g><g transform="translate(203.1 112.2) scale(0.86)"><rect x="1.500" y="1.500" width="9.500" height="9.500" rx="1" fill="#d2d21e" stroke="#5c5c00" stroke-width="1.200"/><path d="M8.500 4h-4.500v4.500h4.500M8.500 6.300h-2" stroke="#5c5c00" stroke-width="1.400" fill="none"/><rect x="5" y="4.800" width="3" height="3" fill="#f8f8d0"/></g><g transform="translate(216.6 112.2) scale(0.86)"><path d="M1.500 4l2.500-2.500h7.500v7l-2.500 2.500h-7.500z" fill="#fff" stroke="#2434b4" stroke-width="1.300"/><path d="M9 1.500l2.500 0 0 7-2.500 2.500z" fill="#2434b4"/><path d="M4 9l2.500-5M6.500 4l1 2" stroke="#222" stroke-width="1.300"/></g><path d="M782 632.500v5l3-2.500z" fill="#000"/><path d="M320 632.500v5l-3-2.500z" fill="#000"/><g transform="translate(159.6 629.6) scale(0.9)"><path d="M2 5l2.500-2.500h5.500v5l-2.500 3h-5.500zM2 5h5.500v5.500M7.500 5l2.500-2.500" fill="#fff" stroke="#000" stroke-width="1.100"/></g><g transform="translate(172.6 629.6) scale(0.9)"><path d="M2 5l2.500-2.500h5.500v5l-2.500 3h-5.500z" fill="#d2d21e" stroke="#000" stroke-width="1.100"/><path d="M2 5h5.500v5.500M7.500 5l2.500-2.500" fill="none" stroke="#000"/></g><g transform="translate(187.6 629.6) scale(0.9)"><path d="M1.500 10h9.500M6 1.500v6M3 10l3-4.500 3 4.500" stroke="#8c887e" fill="none" stroke-width="1.100"/></g><g transform="translate(201.6 629.6) scale(0.9)"><path d="M1.500 10.500h9.500M1.500 10.500v-8M3.500 10v-4M6 10v-2.500M8.500 10v-5" stroke="#8c887e" fill="none" stroke-width="1.100"/></g><g transform="translate(214.6 629.6) scale(0.9)"><rect x="-1" y="-1.500" width="14" height="14.500" fill="#f2f0ea"/><path d="M2 11v-9" stroke="#222" stroke-width="1.200"/><path d="M2 2.500h8.500v3.500h-8.500" fill="#fff" stroke="#d42020" stroke-width="1.200"/><path d="M4 9h6" stroke="#2434b4"/></g><g transform="translate(230.6 629.6) scale(0.9)"><path d="M1 3.500h10" stroke="#222" stroke-width="2.500" stroke-dasharray="2.500 .8"/><path d="M1 8.500h10" stroke="#2434b4" stroke-width="1.300"/><circle cx="6" cy="8.500" r="1.500" fill="#2434b4"/></g><g transform="translate(242.6 629.6) scale(0.9)"><path d="M1 3h10" stroke="#222" stroke-width="2.500" stroke-dasharray="2.500 .8"/><path d="M2 10l3-4 4 1.500 2-2v4.500z" fill="#a0a020" stroke="#404000" stroke-width=".8"/></g><g transform="translate(257.6 629.6) scale(0.9)"><path d="M1 10.500h10.500l-4-8z" fill="none" stroke="#8c887e"/><path d="M3 10l3-5M5.500 10l2-3.500M8 10l1-1.500" stroke="#d42020" stroke-width=".8" stroke-dasharray="1 .7"/><path d="M2 8l6-5" stroke="#50a030"/></g><g transform="translate(272.6 629.6) scale(0.9)"><path d="M2 11v-9.500M2 2h8.500v5h-8.500" fill="#e4e2dc" stroke="#9c988e" stroke-width="1.100"/></g><g transform="translate(287.6 629.6) scale(0.9)"><rect x="1.500" y="1.500" width="6" height="6" fill="#d2d21e" stroke="#2434b4" stroke-width="1.200"/><rect x="5" y="5" width="5.500" height="5.500" fill="#30a0c0" stroke="#2434b4" stroke-width="1.200"/><path d="M3 3h3M3 5h2" stroke="#50a030"/></g><g transform="translate(301.6 629.6) scale(0.9)"><path d="M2 5.500h4M4 3.500v4M8 1.500v9.500M8 3h2.500M8 6h2.500M8 9h2.500" stroke="#8c887e" stroke-width="1.100" fill="none"/><rect x="1.500" y="8" width="4" height="3" fill="#b4b0a6"/></g><path d="M942 648.500h3.500M943.700 647.500v4M945 648v3" stroke="#fff" stroke-width=".9" fill="none"/><path d="M951 648l4.500 4.500M955.500 648l-4.500 4.500" stroke="#fff" stroke-width="1.300"/><path d="M164 661v7l1.800-1.500 1.200 2.500 1-.5-1.200-2.500h2.200z" fill="#e8e6e0" stroke="#a09c94" stroke-width=".7"/><g transform="translate(672.3 659.3) scale(0.95)"><path d="M2.500 3l6.500 6" stroke="#908c84"/><circle cx="2.500" cy="3" r="1" fill="#908c84"/><circle cx="9" cy="9" r="1" fill="#908c84"/></g><g transform="translate(686.3 659.3) scale(0.95)"><path d="M2.500 3l6.500 6" stroke="#908c84"/><circle cx="6" cy="6.300" r="1" fill="#908c84"/><circle cx="9" cy="9" r="1" fill="#908c84"/></g><g transform="translate(700.3 659.3) scale(0.95)"><circle cx="6" cy="6" r="3.500" fill="none" stroke="#908c84"/><circle cx="6" cy="6" r="1" fill="#908c84"/></g><g transform="translate(713.3 659.3) scale(0.95)"><path d="M2.500 2.500l7 7M9.500 2.500l-7 7" stroke="#908c84"/></g><g transform="translate(730.3 659.3) scale(0.95)"><path d="M2 10l4-6 4 6" stroke="#908c84" fill="none"/><circle cx="6" cy="4" r="1" fill="#908c84"/></g><g transform="translate(743.3 659.3) scale(0.95)"><path d="M2 9q3-7 8-5" stroke="#908c84" fill="none"/><circle cx="9" cy="4" r="1" fill="#908c84"/></g><g transform="translate(757.3 659.3) scale(0.95)"><path d="M2 3h8l-5 4.500 4 2" stroke="#908c84" fill="none" stroke-dasharray="1.500 .8"/></g><g transform="translate(771.3 659.3) scale(0.95)"><path d="M2 9l8-5" stroke="#908c84"/><circle cx="2" cy="9" r="1" fill="#908c84"/><circle cx="10" cy="4" r="1" fill="#908c84"/></g><g transform="translate(784.8 659.3) scale(0.95)"><path d="M2 3l4.500 6.500 1-3 3-1z" fill="#2434b4"/><rect x="6" y="1" width="5" height="4" fill="#d8dcf8" stroke="#2434b4"/><path d="M1 9l3 2" stroke="#d42020" stroke-width="1.400"/></g><g transform="translate(799.8 659.3) scale(0.95)"><path d="M1.500 2h10M1.500 4.500h10M1.500 7h10M1.500 9.500h10" stroke="#000" stroke-width="1.300" stroke-dasharray="1.300 1.200"/></g><g transform="translate(813.3 659.3) scale(0.95)"><path d="M1 10h10" stroke="#2434b4" stroke-width="1.400"/><path d="M4 2v8M8 4v6M2.500 3.500l1.500-1.500M4 2h4" stroke="#d42020" stroke-width="1.100" fill="none"/></g><g transform="translate(826.8 659.3) scale(0.95)"><path d="M1.500 10.500l9-9M2 2l8.500 8.500" stroke="#222" stroke-width="1.100"/><circle cx="6" cy="6" r="1.600" fill="#50a030"/><path d="M8 2h3v3" stroke="#50a030" fill="none"/></g><g transform="translate(840.3 659.3) scale(0.95)"><rect x="-1" y="-1.500" width="13.500" height="15" fill="#f2f0ea"/><path d="M2 3l8 8" stroke="#222" stroke-width="1.300"/><path d="M3.500 1.500v6" stroke="#222"/><circle cx="3" cy="3.500" r="1.500" fill="#d42020"/></g><g transform="translate(853.8 659.3) scale(0.95)"><rect x="-1" y="-1.500" width="13.500" height="15" fill="#f2f0ea"/><path d="M2 3l8 8" stroke="#d42020" stroke-width="1.400"/><path d="M3.500 1.500v6" stroke="#222"/><circle cx="3" cy="3.500" r="1.400" fill="#d42020"/></g><g transform="translate(867.3 659.3) scale(0.95)"><rect x="-1" y="-1.500" width="13.500" height="15" fill="#f2f0ea"/><path d="M2 2.500l8 8.500M2 2.500h8.500l-5 8" stroke="#222" stroke-width="1.100" fill="none"/><circle cx="6.500" cy="7.500" r="1.500" fill="#d42020"/></g><g transform="translate(880.3 659.3) scale(0.95)"><rect x="-1" y="-1.500" width="13.500" height="15" fill="#f2f0ea"/><path d="M2 3h8.500l-3 7.500z" fill="none" stroke="#222" stroke-width="1.100" stroke-dasharray="1.500 .8"/><circle cx="3" cy="3" r="1.300" fill="#d42020"/><circle cx="10" cy="3.500" r="1.300" fill="#d42020"/><circle cx="7.500" cy="10" r="1.300" fill="#d42020"/></g><g transform="translate(892.8 659.3) scale(0.95)"><path d="M2 10.500q1-8 8.500-8.500M7.500 1v10" stroke="#222" stroke-width="1.200" fill="none"/><circle cx="3" cy="5.500" r="1.300" fill="#d42020"/><circle cx="8" cy="9.500" r="1.300" fill="#d42020"/></g><g transform="translate(906.3 659.3) scale(0.95)"><path d="M2.500 1.500v9h8.500M2.500 10.500l8-8" stroke="#222" stroke-width="1.200" fill="none"/><circle cx="3" cy="3.500" r="1.300" fill="#d42020"/><circle cx="9.500" cy="10" r="1.300" fill="#d42020"/></g><g transform="translate(919.3 659.3) scale(0.95)"><path d="M2 10.500q6-1 8.500-9" stroke="#222" stroke-width="1.200" fill="none"/><path d="M3 3.500l5 3" stroke="#d42020" stroke-width="1.300"/><circle cx="3" cy="3.500" r="1.200" fill="#d42020"/></g><g transform="translate(932.8 659.3) scale(0.95)"><rect x="-1" y="-1.500" width="13.500" height="15" fill="#f2f0ea"/><rect x="1.500" y="6.500" width="9.500" height="4.500" fill="#d2d21e" stroke="#404000"/><path d="M2 4h9M3 2v3" stroke="#d42020" stroke-width="1.100"/></g><g transform="translate(946.3 659.3) scale(0.95)"><rect x="2" y="2.500" width="8" height="8.500" fill="#f4f0b0" stroke="#806020" stroke-width="1.100"/><path d="M4.500 1v3M1 4.500h3.500" stroke="#d42020" stroke-width="1.100"/></g><path d="M4 708.500q2-1 3.500 0v3q-1.500-1-3.500 0z" fill="#e03020"/><path d="M8 708.500q1.500 1 3.500 0v3q-2 1-3.500 0z" fill="#30a030"/><path d="M4 712.500q2-1 3.500 0v3q-1.500-1-3.500 0z" fill="#3060d0"/><path d="M8 712.500q1.500 1 3.500 0v3q-2 1-3.500 0z" fill="#f0c020"/><rect x="39" y="706.5" width="9" height="9" fill="#1c4c9c"/><path d="M41 713.5v-5h2q1.500 1 0 2.500h-2M45 713.5h1.500" stroke="#a0d0ff" stroke-width=".9" fill="none"/><path d="M139 707.5l3 8 2-3 3-5z" fill="#e0a030" stroke="#604010" stroke-width=".7"/><path d="M140 707.5l2 7" stroke="#3080e0" stroke-width="1.300"/><path d="M145 707.5l-2 6" stroke="#30a040" stroke-width="1.300"/><path d="M236 713.5l6-7 3 2-6 7z" fill="#e8b020" stroke="#604000" stroke-width=".7"/><path d="M238 711.5l4 2" stroke="#604000"/><path d="M336 707.5l3 1 2 3z" fill="#e83020"/><path d="M339 708.5l4-1-2 4z" fill="#f0c020"/><path d="M343 707.5l3 0-5 4z" fill="#30a030"/><path d="M341 711.5l-1 4 3 0z" fill="#3060e0"/><path d="M336 707.5l4 8 1-4z" fill="#c02080" opacity=".7"/><rect x="435" y="706.5" width="9.500" height="9.500" fill="#e8d0d0" stroke="#802020" stroke-width=".8"/><path d="M437 708.5l2.500 6 2-4 1.500 4" stroke="#c02020" fill="none" stroke-width="1.100"/><path d="M534 708.5h3l1 1h5.500v6h-9.500z" fill="#f0d860" stroke="#806000" stroke-width=".8"/></svg>
<svg style="left:0;top:0" width="960" height="720" viewBox="0 0 960 720">
<defs>
<linearGradient id="mem" gradientUnits="userSpaceOnUse" x1="640" y1="190" x2="420" y2="380"><stop offset="0" stop-color="#7e170e"/><stop offset=".3" stop-color="#ac2618"/><stop offset=".65" stop-color="#dc4029"/><stop offset="1" stop-color="#f05634"/></linearGradient>
<linearGradient id="mem2" gradientUnits="userSpaceOnUse" x1="720" y1="215" x2="520" y2="385"><stop offset="0" stop-color="#7e170e"/><stop offset=".3" stop-color="#a82416"/><stop offset=".65" stop-color="#d83c27"/><stop offset="1" stop-color="#ec4e31"/></linearGradient>
<linearGradient id="cyl" x1="0" y1="0" x2="1" y2="0"><stop offset="0" stop-color="#6e6e6e"/><stop offset=".45" stop-color="#a6a6a6"/><stop offset="1" stop-color="#707070"/></linearGradient>
<linearGradient id="gcol" x1="0" y1="0" x2="1" y2="0"><stop offset="0" stop-color="#8cc49a"/><stop offset=".5" stop-color="#d8f4dc"/><stop offset="1" stop-color="#8abf98"/></linearGradient>
<clipPath id="vp"><rect x="159" y="57" width="790" height="571"/></clipPath>
</defs>
<g clip-path="url(#vp)" stroke-linejoin="round" stroke-linecap="butt">
<polyline points="528.0,120.1 782.0,186.7" fill="none" stroke="#303030" stroke-width="0.7" stroke-dasharray="6.5 4.5" />
<polyline points="528.0,141.3 782.0,207.9" fill="none" stroke="#303030" stroke-width="0.7" stroke-dasharray="6.5 4.5" />
<polyline points="528.0,162.8 782.0,229.4" fill="none" stroke="#303030" stroke-width="0.7" stroke-dasharray="6.5 4.5" />
<polyline points="548.0,100.0 548.0,186.0" fill="none" stroke="#303030" stroke-width="0.7" stroke-dasharray="6.5 4.5" />
<polyline points="671.0,137.0 671.0,219.0" fill="none" stroke="#303030" stroke-width="0.7" stroke-dasharray="6.5 4.5" />
<polyline points="680.0,137.0 680.0,345.0" fill="none" stroke="#303030" stroke-width="0.7" stroke-dasharray="6.5 4.5" />
<polyline points="758.7,161.0 758.7,396.0" fill="none" stroke="#303030" stroke-width="0.7" stroke-dasharray="6.5 4.5" />
<polyline points="772.0,170.0 640.0,279.0" fill="none" stroke="#303030" stroke-width="0.7" stroke-dasharray="6.5 4.5" />
<polyline points="772.0,192.0 640.0,301.0" fill="none" stroke="#303030" stroke-width="0.7" stroke-dasharray="6.5 4.5" />
<polyline points="772.0,237.0 640.0,346.0" fill="none" stroke="#303030" stroke-width="0.7" stroke-dasharray="6.5 4.5" />
<polyline points="740.0,243.0 782.0,256.0" fill="none" stroke="#303030" stroke-width="0.7" stroke-dasharray="6.5 4.5" />
<polyline points="750.0,376.0 783.0,385.0" fill="none" stroke="#303030" stroke-width="0.7" stroke-dasharray="6.5 4.5" />
<polygon points="276.4,475.6 528.7,544.0 746.0,361.0 494.0,295.0" fill="#666666" stroke="none" stroke-width="0" />
<polygon points="276.4,475.6 528.7,544.0 528.7,553.2 276.4,484.4" fill="#8e8e8e" stroke="none" stroke-width="0" />
<polygon points="528.7,544.0 746.0,361.0 746.0,370.5 528.7,553.2" fill="#3e3e3e" stroke="none" stroke-width="0" />
<polyline points="276.4,475.6 528.7,544.0" fill="none" stroke="#8a8a8a" stroke-width="0.6" />
<polyline points="341.0,477.5 540.0,531.0" fill="none" stroke="#3a3a3a" stroke-width="0.8" stroke-dasharray="6.5 4.5" />
<polyline points="470.0,525.0 690.0,340.0" fill="none" stroke="#3a3a3a" stroke-width="0.8" stroke-dasharray="6.5 4.5" />
<polyline points="481.0,527.0 697.0,346.0" fill="none" stroke="#3a3a3a" stroke-width="0.8" stroke-dasharray="6.5 4.5" />
<polyline points="345.0,493.0 560.0,312.5" fill="none" stroke="#3a3a3a" stroke-width="0.8" stroke-dasharray="6.5 4.5" />
<polyline points="540.0,321.0 735.0,373.0" fill="none" stroke="#3a3a3a" stroke-width="0.8" stroke-dasharray="6.5 4.5" />
<polyline points="560.0,333.0 735.0,379.0" fill="none" stroke="#3a3a3a" stroke-width="0.7" stroke-dasharray="6.5 4.5" />
<polyline points="540.0,531.0 592.0,545.0" fill="none" stroke="#303030" stroke-width="0.7" stroke-dasharray="6.5 4.5" />
<polyline points="760.0,378.0 534.0,566.0" fill="none" stroke="#303030" stroke-width="0.7" stroke-dasharray="6.5 4.5" />
<polyline points="520.0,565.0 560.0,546.0" fill="none" stroke="#303030" stroke-width="0.7" stroke-dasharray="6 3 1.500 3" />
<polyline points="569.0,317.0 569.0,590.0" fill="none" stroke="#303030" stroke-width="0.8" stroke-dasharray="6.5 4.5" />
<polyline points="569.0,585.0 569.0,607.0" fill="none" stroke="#333" stroke-width="0.7" />
<polyline points="758.7,417.0 758.7,462.0" fill="none" stroke="#333" stroke-width="0.7" />
<polyline points="287.0,462.5 415.0,357.5" fill="none" stroke="#2c2c2c" stroke-width="0.7" />
<polyline points="287.0,462.5 318.0,470.5" fill="none" stroke="#2c2c2c" stroke-width="0.7" />
<polyline points="315.5,515.0 528.0,572.0" fill="none" stroke="#2c2c2c" stroke-width="0.7" />
<polyline points="308.0,522.0 522.5,578.5" fill="none" stroke="#2c2c2c" stroke-width="0.7" />
<polyline points="337.0,502.0 308.0,522.0" fill="none" stroke="#2c2c2c" stroke-width="0.7" />
<polyline points="464.0,536.0 445.5,549.0" fill="none" stroke="#2c2c2c" stroke-width="0.7" />
<polyline points="471.0,538.0 453.0,551.0" fill="none" stroke="#2c2c2c" stroke-width="0.7" />
<polyline points="528.7,544.0 528.7,574.0" fill="none" stroke="#2c2c2c" stroke-width="0.7" />
<polyline points="528.7,571.5 522.0,578.5" fill="none" stroke="#2c2c2c" stroke-width="0.7" />
<polyline points="569.0,606.0 758.7,448.0" fill="none" stroke="#2c2c2c" stroke-width="0.7" />
<polyline points="676.0,426.0 758.7,448.0" fill="none" stroke="#2c2c2c" stroke-width="0.7" />
<polyline points="668.7,437.0 758.7,461.0" fill="none" stroke="#2c2c2c" stroke-width="0.7" />
<polyline points="829.0,200.0 829.0,397.5" fill="none" stroke="#2c2c2c" stroke-width="0.7" />
<polyline points="841.5,204.0 841.5,402.5" fill="none" stroke="#2c2c2c" stroke-width="0.7" />
<polyline points="797.5,191.0 844.0,203.7" fill="none" stroke="#2c2c2c" stroke-width="0.7" />
<polyline points="797.5,213.5 831.0,222.5" fill="none" stroke="#2c2c2c" stroke-width="0.7" />
<polyline points="797.5,235.0 831.0,244.0" fill="none" stroke="#2c2c2c" stroke-width="0.7" />
<polyline points="797.5,261.0 831.0,270.0" fill="none" stroke="#2c2c2c" stroke-width="0.7" />
<polyline points="797.5,390.0 844.0,402.5" fill="none" stroke="#2c2c2c" stroke-width="0.7" />
<polyline points="528.7,375.0 528.7,544.0" fill="none" stroke="#2c2c2c" stroke-width="0.7" />
<text x="382" y="532" transform="rotate(15 382 532)" font-family="'Liberation Sans',sans-serif" font-style="italic" font-size="7" fill="#222" text-anchor="middle" >2820</text>
<text x="419" y="549" transform="rotate(15 419 549)" font-family="'Liberation Sans',sans-serif" font-style="italic" font-size="7" fill="#222" text-anchor="middle" >4820</text>
<text x="449" y="550" transform="rotate(15 449 550)" font-family="'Liberation Sans',sans-serif" font-style="italic" font-size="6" fill="#222" text-anchor="middle" >200</text>
<text x="492.5" y="562" transform="rotate(15 492.5 562)" font-family="'Liberation Sans',sans-serif" font-style="italic" font-size="7" fill="#222" text-anchor="middle" >1800</text>
<text x="721" y="433" transform="rotate(15 721 433)" font-family="'Liberation Sans',sans-serif" font-style="italic" font-size="7" fill="#222" text-anchor="middle" >1800</text>
<text x="664" y="524" transform="rotate(-40 664 524)" font-family="'Liberation Sans',sans-serif" font-style="italic" font-size="5.5" fill="#222" text-anchor="middle" >7845</text>
<text x="379" y="381" transform="rotate(-40 379 381)" font-family="'Liberation Sans',sans-serif" font-style="italic" font-size="5.5" fill="#222" text-anchor="middle" >7845</text>
<text x="827" y="210.5" transform="rotate(-90 827 210.5)" font-family="'Liberation Sans',sans-serif" font-style="italic" font-size="7" fill="#222" text-anchor="middle" >510</text>
<text x="827" y="231.5" transform="rotate(-90 827 231.5)" font-family="'Liberation Sans',sans-serif" font-style="italic" font-size="7" fill="#222" text-anchor="middle" >490</text>
<text x="827" y="255.5" transform="rotate(-90 827 255.5)" font-family="'Liberation Sans',sans-serif" font-style="italic" font-size="7" fill="#222" text-anchor="middle" >610</text>
<text x="826.5" y="333" transform="rotate(-90 826.5 333)" font-family="'Liberation Sans',sans-serif" font-style="italic" font-size="7" fill="#222" text-anchor="middle" >2950</text>
<text x="840" y="301.5" transform="rotate(-90 840 301.5)" font-family="'Liberation Sans',sans-serif" font-style="italic" font-size="7" fill="#222" text-anchor="middle" >4560</text>
<text x="526" y="402" transform="rotate(-90 526 402)" font-family="'Liberation Sans',sans-serif" font-style="italic" font-size="5" fill="#333" text-anchor="middle" >490</text>
<text x="526" y="428" transform="rotate(-90 526 428)" font-family="'Liberation Sans',sans-serif" font-style="italic" font-size="5" fill="#333" text-anchor="middle" >610</text>
<text x="526" y="480" transform="rotate(-90 526 480)" font-family="'Liberation Sans',sans-serif" font-style="italic" font-size="5" fill="#333" text-anchor="middle" >2950</text>
<rect x="667.500" y="258" width="7" height="98" fill="url(#gcol)" stroke="#4e7a5a" stroke-width=".6"/>
<polygon points="751.0,226.9 678.0,356.9 682.0,359.1 755.0,229.1" fill="#c4ecca" stroke="#4e7a5a" stroke-width="0.7" />
<polyline points="752.6,227.8 679.6,357.8" fill="none" stroke="#e6fbe8" stroke-width="1.38" />
<linearGradient id="sf" gradientUnits="userSpaceOnUse" x1="304" y1="318" x2="351" y2="332"><stop offset="0" stop-color="#5e5e5e"/><stop offset="1" stop-color="#707070"/></linearGradient>
<polygon points="304.4,310.6 483.0,160.5 529.0,172.5 351.0,323.7" fill="#444444" stroke="#222" stroke-width="0.5" />
<polygon points="304.4,310.6 351.0,323.7 351.0,340.0 304.4,327.4" fill="url(#sf)" stroke="#222" stroke-width="0.5" />
<polygon points="351.0,323.7 529.0,172.5 529.0,186.0 351.0,340.0" fill="#3c3c3c" stroke="#222" stroke-width="0.5" />
<rect x="344.800" y="339" width="10.600" height="131" fill="url(#cyl)"/><ellipse cx="350.100" cy="470" rx="5.300" ry="1.600" fill="#8a8a8a"/>
<rect x="394.500" y="352" width="12.300" height="97.500" fill="url(#cyl)"/><ellipse cx="400.650" cy="449.500" rx="6.150" ry="1.800" fill="#8a8a8a"/>
<polygon points="358.7,346.9 360.3,344.2 361.9,341.5 363.5,338.8 365.1,336.1 366.7,333.5 368.3,330.8 370.0,328.2 371.6,325.5 373.2,322.9 374.8,320.2 376.5,317.6 378.1,315.0 379.8,312.4 381.5,309.7 383.1,307.1 384.8,304.5 386.5,301.9 388.3,299.4 390.0,296.8 391.7,294.2 393.5,291.7 395.3,289.1 397.1,286.6 398.9,284.1 400.7,281.5 402.6,279.0 404.4,276.5 406.3,274.1 408.2,271.6 410.2,269.2 412.1,266.7 414.1,264.3 416.1,261.9 418.1,259.5 420.1,257.1 422.2,254.8 424.3,252.5 426.4,250.2 428.5,247.9 430.7,245.6 432.9,243.4 435.1,241.1 437.3,239.0 439.5,236.8 441.8,234.7 444.1,232.5 446.5,230.5 448.8,228.4 451.2,226.4 453.6,224.4 456.1,222.5 458.5,220.6 461.0,218.7 463.5,216.9 466.1,215.1 468.7,213.3 471.3,211.6 473.9,209.9 476.5,208.3 479.2,206.7 481.9,205.2 484.7,203.7 487.4,202.3 490.2,200.9 493.0,199.6 495.8,198.3 498.7,197.1 501.6,196.0 504.5,194.9 507.4,193.9 510.4,192.9 513.4,192.0 516.4,191.2 519.4,190.5 522.5,189.8 525.6,189.2 528.7,188.7 531.8,188.2 534.9,187.8 538.1,187.6 538.0,188.0 660.0,221.5 671.0,221.0 671.2,220.6 667.8,220.4 664.4,220.4 661.1,220.4 657.7,220.6 654.4,220.9 651.2,221.3 647.9,221.8 644.7,222.4 641.5,223.1 638.4,223.9 635.3,224.7 632.2,225.7 629.1,226.8 626.1,227.9 623.1,229.1 620.2,230.4 617.2,231.7 614.3,233.2 611.5,234.7 608.6,236.2 605.8,237.8 603.0,239.5 600.3,241.2 597.6,243.0 594.9,244.9 592.3,246.8 589.6,248.7 587.0,250.7 584.5,252.7 582.0,254.8 579.5,256.9 577.0,259.1 574.6,261.2 572.1,263.5 569.8,265.7 567.4,268.0 565.1,270.3 562.8,272.6 560.5,275.0 558.2,277.4 556.0,279.8 553.8,282.2 551.6,284.7 549.5,287.1 547.4,289.6 545.3,292.1 543.2,294.6 541.1,297.2 539.1,299.7 537.0,302.3 535.0,304.8 533.1,307.4 531.1,310.0 529.1,312.6 527.2,315.2 525.3,317.8 523.4,320.4 521.5,323.0 519.6,325.7 517.7,328.3 515.9,330.9 514.0,333.6 512.2,336.2 510.3,338.9 508.5,341.6 506.7,344.2 504.9,346.9 503.1,349.6 501.2,352.3 499.4,354.9 497.6,357.6 495.8,360.3 494.0,363.0 492.1,365.7 490.3,368.5 488.5,371.2 486.6,373.9 484.8,376.6 482.9,379.4 481.0,382.1 481.0,382.0 478.8,381.0 476.7,380.0 474.5,378.9 472.3,377.9 470.1,376.8 467.9,375.8 465.8,374.8 463.6,373.8 461.4,372.8 459.3,371.8 457.1,370.9 455.0,370.0 452.9,369.1 450.8,368.3 448.7,367.5 446.6,366.7 444.5,365.9 442.4,365.2 440.4,364.5 438.3,363.7 436.2,363.0 434.2,362.3 432.1,361.7 430.0,361.0 427.9,360.3 425.8,359.7 423.8,359.0 421.7,358.4 419.6,357.7 417.5,357.1 415.4,356.5 413.3,356.0 411.2,355.4 409.2,354.9 407.1,354.4 405.0,354.0 402.9,353.6 400.8,353.2 398.7,352.9 396.5,352.6 394.4,352.4 392.2,352.1 390.1,351.9 388.0,351.7 386.0,351.5 383.9,351.3 381.9,351.2 380.0,351.0 378.1,350.8 376.3,350.7 374.5,350.6 372.7,350.5 371.0,350.4 369.2,350.4 367.5,350.3 365.9,350.3 364.2,350.2 362.5,350.1 360.7,350.1 359.0,350.0" fill="url(#mem)" stroke="none" stroke-width="0" />
<polygon points="481.0,382.1 482.9,379.4 484.8,376.6 486.6,373.9 488.5,371.2 490.3,368.5 492.1,365.7 494.0,363.0 495.8,360.3 497.6,357.6 499.4,354.9 501.2,352.3 503.1,349.6 504.9,346.9 506.7,344.2 508.5,341.6 510.3,338.9 512.2,336.2 514.0,333.6 515.9,330.9 517.7,328.3 519.6,325.7 521.5,323.0 523.4,320.4 525.3,317.8 527.2,315.2 529.1,312.6 531.1,310.0 533.1,307.4 535.0,304.8 537.0,302.3 539.1,299.7 541.1,297.2 543.2,294.6 545.3,292.1 547.4,289.6 549.5,287.1 551.6,284.7 553.8,282.2 556.0,279.8 558.2,277.4 560.5,275.0 562.8,272.6 565.1,270.3 567.4,268.0 569.8,265.7 572.1,263.5 574.6,261.2 577.0,259.1 579.5,256.9 582.0,254.8 584.5,252.7 587.0,250.7 589.6,248.7 592.3,246.8 594.9,244.9 597.6,243.0 600.3,241.2 603.0,239.5 605.8,237.8 608.6,236.2 611.5,234.7 614.3,233.2 617.2,231.7 620.2,230.4 623.1,229.1 626.1,227.9 629.1,226.8 632.2,225.7 635.3,224.7 638.4,223.9 641.5,223.1 644.7,222.4 647.9,221.8 651.2,221.3 654.4,220.9 657.7,220.6 661.1,220.4 664.4,220.4 667.8,220.4 671.2,220.6 671.0,221.0 718.0,226.5 720.0,224.9 717.4,225.9 714.8,227.0 712.3,228.1 709.7,229.3 707.2,230.5 704.8,231.8 702.3,233.1 699.9,234.5 697.5,235.8 695.1,237.3 692.8,238.7 690.5,240.2 688.2,241.8 685.9,243.3 683.7,244.9 681.5,246.5 679.3,248.2 677.1,249.9 674.9,251.6 672.8,253.3 670.7,255.1 668.6,256.8 666.5,258.7 664.4,260.5 662.4,262.3 660.3,264.2 658.3,266.1 656.3,268.0 654.3,269.9 652.4,271.9 650.4,273.8 648.5,275.8 646.5,277.8 644.6,279.8 642.7,281.8 640.9,283.9 639.0,285.9 637.1,288.0 635.3,290.0 633.5,292.1 631.7,294.2 629.9,296.3 628.1,298.4 626.3,300.6 624.5,302.7 622.8,304.8 621.0,307.0 619.3,309.2 617.6,311.3 615.9,313.5 614.2,315.7 612.5,317.9 610.8,320.1 609.1,322.3 607.5,324.5 605.8,326.7 604.2,328.9 602.6,331.2 601.0,333.4 599.4,335.7 597.8,337.9 596.2,340.2 594.7,342.4 593.1,344.7 591.6,347.0 590.0,349.3 588.5,351.6 587.0,353.9 585.5,356.2 584.0,358.6 582.6,360.9 581.1,363.3 579.6,365.6 578.2,368.0 576.8,370.4 575.4,372.8 574.0,375.2 572.6,377.6 571.3,380.0 569.9,382.5 570.0,382.0 568.8,381.7 567.6,381.3 566.5,381.0 565.4,380.6 564.3,380.3 563.1,379.9 562.0,379.6 560.7,379.3 559.5,378.9 558.1,378.6 556.6,378.3 555.0,378.0 553.3,377.7 551.5,377.3 549.6,377.0 547.6,376.6 545.5,376.3 543.4,375.9 541.3,375.6 539.1,375.4 536.8,375.2 534.6,375.0 532.3,375.0 530.0,375.0 527.6,375.1 525.2,375.4 522.6,375.8 520.0,376.2 517.3,376.7 514.6,377.2 512.0,377.7 509.4,378.3 506.8,378.8 504.4,379.2 502.1,379.7 500.0,380.0 498.0,380.3 496.2,380.5 494.5,380.7 492.9,380.9 491.3,381.0 489.8,381.2 488.4,381.3 486.9,381.4 485.5,381.6 484.0,381.7 482.5,381.8 481.0,382.0" fill="url(#mem2)" stroke="none" stroke-width="0" />
<path d="M359.0 350.0L377.2 350.8L395.3 352.5L413.2 355.9L430.6 361.2L447.8 367.2L464.5 374.2L481.0 382.0M367.9 331.6L385.5 336.6L403.2 341.6L420.8 346.6L438.5 351.7L456.2 356.7L473.8 361.7L491.5 366.7M377.2 316.4L395.0 321.4L412.8 326.4L430.7 331.4L448.5 336.3L466.3 341.3L484.1 346.3L501.9 351.3M386.9 301.5L404.8 306.4L422.7 311.3L440.7 316.2L458.6 321.1L476.6 326.0L494.5 331.0L512.4 335.9M396.9 286.8L415.0 291.6L433.0 296.5L451.1 301.3L469.1 306.1L487.1 311.0L505.2 315.8L523.2 320.6M407.6 272.5L425.7 277.2L443.8 282.0L461.9 286.7L480.0 291.5L498.1 296.2L516.3 301.0L534.4 305.7M418.8 258.7L437.0 263.3L455.2 268.0L473.3 272.6L491.5 277.2L509.7 281.9L527.9 286.5L546.1 291.2M430.8 245.5L449.0 250.0L467.2 254.6L485.5 259.1L503.7 263.6L521.9 268.1L540.2 272.7L558.4 277.2M443.5 233.1L461.8 237.5L480.1 241.9L498.4 246.3L516.7 250.7L535.0 255.2L553.3 259.6L571.6 264.0M457.2 221.6L475.5 225.9L493.9 230.2L512.2 234.6L530.6 238.9L549.0 243.2L567.3 247.5L585.7 251.8M471.7 211.3L490.1 215.5L508.6 219.8L527.0 224.0L545.5 228.2L563.9 232.5L582.4 236.7L600.8 240.9M487.1 202.4L505.7 206.6L524.3 210.8L542.8 215.0L561.4 219.2L579.9 223.4L598.5 227.6L617.1 231.8M503.4 195.3L522.1 199.6L540.9 203.8L559.6 208.0L578.3 212.3L597.0 216.5L615.7 220.8L634.4 225.0M520.5 190.2L539.4 194.7L558.2 199.1L577.1 203.5L596.0 207.9L614.9 212.3L633.7 216.7L652.6 221.1M538.1 187.6L557.1 192.3L576.1 197.0L595.1 201.7L614.2 206.4L633.2 211.1L652.2 215.9L671.2 220.6M359.0 350.0L367.9 331.6L377.2 316.4L386.9 301.5L396.9 286.8L407.6 272.5L418.8 258.7L430.8 245.5L443.5 233.1L457.2 221.6L471.7 211.3L487.1 202.4L503.4 195.3L520.5 190.2L538.1 187.6M377.2 350.8L385.5 336.6L395.0 321.4L404.8 306.4L415.0 291.6L425.7 277.2L437.0 263.3L449.0 250.0L461.8 237.5L475.5 225.9L490.1 215.5L505.7 206.6L522.1 199.6L539.4 194.7L557.1 192.3M395.3 352.5L403.2 341.6L412.8 326.4L422.7 311.3L433.0 296.5L443.8 282.0L455.2 268.0L467.2 254.6L480.1 241.9L493.9 230.2L508.6 219.8L524.3 210.8L540.9 203.8L558.2 199.1L576.1 197.0M413.2 355.9L420.8 346.6L430.7 331.4L440.7 316.2L451.1 301.3L461.9 286.7L473.3 272.6L485.5 259.1L498.4 246.3L512.2 234.6L527.0 224.0L542.8 215.0L559.6 208.0L577.1 203.5L595.1 201.7M430.6 361.2L438.5 351.7L448.5 336.3L458.6 321.1L469.1 306.1L480.0 291.5L491.5 277.2L503.7 263.6L516.7 250.7L530.6 238.9L545.5 228.2L561.4 219.2L578.3 212.3L596.0 207.9L614.2 206.4M447.8 367.2L456.2 356.7L466.3 341.3L476.6 326.0L487.1 311.0L498.1 296.2L509.7 281.9L521.9 268.1L535.0 255.2L549.0 243.2L563.9 232.5L579.9 223.4L597.0 216.5L614.9 212.3L633.2 211.1M464.5 374.2L473.8 361.7L484.1 346.3L494.5 331.0L505.2 315.8L516.3 301.0L527.9 286.5L540.2 272.7L553.3 259.6L567.3 247.5L582.4 236.7L598.5 227.6L615.7 220.8L633.7 216.7L652.2 215.9M481.0 382.0L491.5 366.7L501.9 351.3L512.4 335.9L523.2 320.6L534.4 305.7L546.1 291.2L558.4 277.2L571.6 264.0L585.7 251.8L600.8 240.9L617.1 231.8L634.4 225.0L652.6 221.1L671.2 220.6M359.0 350.0L385.5 336.6M385.5 336.6L395.3 352.5M395.3 352.5L420.8 346.6M420.8 346.6L430.6 361.2M430.6 361.2L456.2 356.7M456.2 356.7L464.5 374.2M464.5 374.2L491.5 366.7M377.2 316.4L385.5 336.6M385.5 336.6L412.8 326.4M412.8 326.4L420.8 346.6M420.8 346.6L448.5 336.3M448.5 336.3L456.2 356.7M456.2 356.7L484.1 346.3M484.1 346.3L491.5 366.7M377.2 316.4L404.8 306.4M404.8 306.4L412.8 326.4M412.8 326.4L440.7 316.2M440.7 316.2L448.5 336.3M448.5 336.3L476.6 326.0M476.6 326.0L484.1 346.3M484.1 346.3L512.4 335.9M396.9 286.8L404.8 306.4M404.8 306.4L433.0 296.5M433.0 296.5L440.7 316.2M440.7 316.2L469.1 306.1M469.1 306.1L476.6 326.0M476.6 326.0L505.2 315.8M505.2 315.8L512.4 335.9M396.9 286.8L425.7 277.2M425.7 277.2L433.0 296.5M433.0 296.5L461.9 286.7M461.9 286.7L469.1 306.1M469.1 306.1L498.1 296.2M498.1 296.2L505.2 315.8M505.2 315.8L534.4 305.7M418.8 258.7L425.7 277.2M425.7 277.2L455.2 268.0M455.2 268.0L461.9 286.7M461.9 286.7L491.5 277.2M491.5 277.2L498.1 296.2M498.1 296.2L527.9 286.5M527.9 286.5L534.4 305.7M418.8 258.7L449.0 250.0M449.0 250.0L455.2 268.0M455.2 268.0L485.5 259.1M485.5 259.1L491.5 277.2M491.5 277.2L521.9 268.1M521.9 268.1L527.9 286.5M527.9 286.5L558.4 277.2M443.5 233.1L449.0 250.0M449.0 250.0L480.1 241.9M480.1 241.9L485.5 259.1M485.5 259.1L516.7 250.7M516.7 250.7L521.9 268.1M521.9 268.1L553.3 259.6M553.3 259.6L558.4 277.2M443.5 233.1L475.5 225.9M475.5 225.9L480.1 241.9M480.1 241.9L512.2 234.6M512.2 234.6L516.7 250.7M516.7 250.7L549.0 243.2M549.0 243.2L553.3 259.6M553.3 259.6L585.7 251.8M471.7 211.3L475.5 225.9M475.5 225.9L508.6 219.8M508.6 219.8L512.2 234.6M512.2 234.6L545.5 228.2M545.5 228.2L549.0 243.2M549.0 243.2L582.4 236.7M582.4 236.7L585.7 251.8M471.7 211.3L505.7 206.6M505.7 206.6L508.6 219.8M508.6 219.8L542.8 215.0M542.8 215.0L545.5 228.2M545.5 228.2L579.9 223.4M579.9 223.4L582.4 236.7M582.4 236.7L617.1 231.8M503.4 195.3L505.7 206.6M505.7 206.6L540.9 203.8M540.9 203.8L542.8 215.0M542.8 215.0L578.3 212.3M578.3 212.3L579.9 223.4M579.9 223.4L615.7 220.8M615.7 220.8L617.1 231.8M503.4 195.3L539.4 194.7M539.4 194.7L540.9 203.8M540.9 203.8L577.1 203.5M577.1 203.5L578.3 212.3M578.3 212.3L614.9 212.3M614.9 212.3L615.7 220.8M615.7 220.8L652.6 221.1M538.1 187.6L539.4 194.7M539.4 194.7L576.1 197.0M576.1 197.0L577.1 203.5M577.1 203.5L614.2 206.4M614.2 206.4L614.9 212.3M614.9 212.3L652.2 215.9M652.2 215.9L652.6 221.1" fill="none" stroke="#5a0c06" stroke-width=".55" stroke-opacity=".62"/>
<path d="M481.0 382.0L496.0 380.5L510.8 378.0L525.6 375.4L540.6 375.6L555.5 378.1L570.0 382.0M492.3 365.5L506.6 365.9L521.0 366.3L535.3 366.6L549.7 367.0L564.0 367.3L578.4 367.7M503.5 348.9L517.5 349.6L531.5 350.3L545.5 351.1L559.5 351.8L573.4 352.5L587.4 353.3M514.9 332.3L528.6 333.5L542.2 334.6L555.9 335.7L569.6 336.9L583.3 338.0L596.9 339.2M526.6 316.0L540.0 317.6L553.4 319.1L566.7 320.7L580.1 322.2L593.5 323.8L606.9 325.3M538.8 300.1L551.9 302.0L564.9 304.0L578.0 305.9L591.1 307.9L604.1 309.8L617.2 311.8M551.7 284.6L564.4 287.0L577.1 289.3L589.8 291.6L602.5 293.9L615.2 296.3L627.9 298.6M565.4 270.0L577.7 272.6L590.0 275.2L602.3 277.9L614.6 280.5L626.8 283.1L639.1 285.8M580.1 256.4L591.9 259.2L603.7 262.0L615.5 264.9L627.3 267.7L639.1 270.6L650.8 273.4M596.0 244.1L607.2 247.0L618.4 249.9L629.6 252.9L640.8 255.8L651.9 258.7L663.1 261.6M613.2 233.7L623.7 236.6L634.2 239.4L644.7 242.2L655.2 245.0L665.6 247.8L676.1 250.6M631.7 225.9L641.4 228.3L651.1 230.8L660.8 233.3L670.5 235.7L680.2 238.2L689.9 240.6M651.2 221.3L660.1 223.1L669.0 224.8L677.9 226.6L686.7 228.4L695.6 230.2L704.5 231.9M671.2 220.6L679.4 221.3L687.5 222.0L695.6 222.7L703.8 223.5L711.9 224.2L720.0 224.9M481.0 382.0L492.3 365.5L503.5 348.9L514.9 332.3L526.6 316.0L538.8 300.1L551.7 284.6L565.4 270.0L580.1 256.4L596.0 244.1L613.2 233.7L631.7 225.9L651.2 221.3L671.2 220.6M496.0 380.5L506.6 365.9L517.5 349.6L528.6 333.5L540.0 317.6L551.9 302.0L564.4 287.0L577.7 272.6L591.9 259.2L607.2 247.0L623.7 236.6L641.4 228.3L660.1 223.1L679.4 221.3M510.8 378.0L521.0 366.3L531.5 350.3L542.2 334.6L553.4 319.1L564.9 304.0L577.1 289.3L590.0 275.2L603.7 262.0L618.4 249.9L634.2 239.4L651.1 230.8L669.0 224.8L687.5 222.0M525.6 375.4L535.3 366.6L545.5 351.1L555.9 335.7L566.7 320.7L578.0 305.9L589.8 291.6L602.3 277.9L615.5 264.9L629.6 252.9L644.7 242.2L660.8 233.3L677.9 226.6L695.6 222.7M540.6 375.6L549.7 367.0L559.5 351.8L569.6 336.9L580.1 322.2L591.1 307.9L602.5 293.9L614.6 280.5L627.3 267.7L640.8 255.8L655.2 245.0L670.5 235.7L686.7 228.4L703.8 223.5M555.5 378.1L564.0 367.3L573.4 352.5L583.3 338.0L593.5 323.8L604.1 309.8L615.2 296.3L626.8 283.1L639.1 270.6L651.9 258.7L665.6 247.8L680.2 238.2L695.6 230.2L711.9 224.2M570.0 382.0L578.4 367.7L587.4 353.3L596.9 339.2L606.9 325.3L617.2 311.8L627.9 298.6L639.1 285.8L650.8 273.4L663.1 261.6L676.1 250.6L689.9 240.6L704.5 231.9L720.0 224.9M481.0 382.0L506.6 365.9M506.6 365.9L510.8 378.0M510.8 378.0L535.3 366.6M535.3 366.6L540.6 375.6M540.6 375.6L564.0 367.3M564.0 367.3L570.0 382.0M503.5 348.9L506.6 365.9M506.6 365.9L531.5 350.3M531.5 350.3L535.3 366.6M535.3 366.6L559.5 351.8M559.5 351.8L564.0 367.3M564.0 367.3L587.4 353.3M503.5 348.9L528.6 333.5M528.6 333.5L531.5 350.3M531.5 350.3L555.9 335.7M555.9 335.7L559.5 351.8M559.5 351.8L583.3 338.0M583.3 338.0L587.4 353.3M526.6 316.0L528.6 333.5M528.6 333.5L553.4 319.1M553.4 319.1L555.9 335.7M555.9 335.7L580.1 322.2M580.1 322.2L583.3 338.0M583.3 338.0L606.9 325.3M526.6 316.0L551.9 302.0M551.9 302.0L553.4 319.1M553.4 319.1L578.0 305.9M578.0 305.9L580.1 322.2M580.1 322.2L604.1 309.8M604.1 309.8L606.9 325.3M551.7 284.6L551.9 302.0M551.9 302.0L577.1 289.3M577.1 289.3L578.0 305.9M578.0 305.9L602.5 293.9M602.5 293.9L604.1 309.8M604.1 309.8L627.9 298.6M551.7 284.6L577.7 272.6M577.7 272.6L577.1 289.3M577.1 289.3L602.3 277.9M602.3 277.9L602.5 293.9M602.5 293.9L626.8 283.1M626.8 283.1L627.9 298.6M580.1 256.4L577.7 272.6M577.7 272.6L603.7 262.0M603.7 262.0L602.3 277.9M602.3 277.9L627.3 267.7M627.3 267.7L626.8 283.1M626.8 283.1L650.8 273.4M580.1 256.4L607.2 247.0M607.2 247.0L603.7 262.0M603.7 262.0L629.6 252.9M629.6 252.9L627.3 267.7M627.3 267.7L651.9 258.7M651.9 258.7L650.8 273.4M613.2 233.7L607.2 247.0M607.2 247.0L634.2 239.4M634.2 239.4L629.6 252.9M629.6 252.9L655.2 245.0M655.2 245.0L651.9 258.7M651.9 258.7L676.1 250.6M613.2 233.7L641.4 228.3M641.4 228.3L634.2 239.4M634.2 239.4L660.8 233.3M660.8 233.3L655.2 245.0M655.2 245.0L680.2 238.2M680.2 238.2L676.1 250.6M651.2 221.3L641.4 228.3M641.4 228.3L669.0 224.8M669.0 224.8L660.8 233.3M660.8 233.3L686.7 228.4M686.7 228.4L680.2 238.2M680.2 238.2L704.5 231.9M651.2 221.3L679.4 221.3M679.4 221.3L669.0 224.8M669.0 224.8L695.6 222.7M695.6 222.7L686.7 228.4M686.7 228.4L711.9 224.2M711.9 224.2L704.5 231.9" fill="none" stroke="#5a0c06" stroke-width=".55" stroke-opacity=".62"/>
<polyline points="538.0,188.5 610.6,230.6" fill="none" stroke="#6a5a52" stroke-width="0.9" stroke-dasharray="2 1" />
<polyline points="660.0,221.5 492.5,198.7" fill="none" stroke="#7a6a64" stroke-width="1.3" />
<polyline points="660.0,221.5 492.5,198.7" fill="none" stroke="#e0d4cc" stroke-width="0.9" stroke-dasharray="4 2.5" />
<polyline points="492.5,198.7 571.0,258.0" fill="none" stroke="#6a5a52" stroke-width="0.9" stroke-dasharray="2 1" />
<polyline points="610.6,230.6 454.0,226.0" fill="none" stroke="#7a6a64" stroke-width="1.3" />
<polyline points="610.6,230.6 454.0,226.0" fill="none" stroke="#e0d4cc" stroke-width="0.9" stroke-dasharray="4 2.5" />
<polyline points="454.0,226.0 533.0,298.0" fill="none" stroke="#6a5a52" stroke-width="0.9" stroke-dasharray="2 1" />
<polyline points="571.0,258.0 414.5,266.0" fill="none" stroke="#7a6a64" stroke-width="1.3" />
<polyline points="571.0,258.0 414.5,266.0" fill="none" stroke="#e0d4cc" stroke-width="0.9" stroke-dasharray="4 2.5" />
<polyline points="414.5,266.0 493.0,350.6" fill="none" stroke="#566a62" stroke-width="1.2" />
<polyline points="533.0,298.0 380.0,320.6" fill="none" stroke="#566a62" stroke-width="1.2" />
<polyline points="538.0,188.5 660.0,221.5" fill="none" stroke="#8a8a80" stroke-width="1.8" />
<polyline points="538.0,188.5 660.0,221.5" fill="none" stroke="#d8d8d0" stroke-width="0.8" stroke-dasharray="1 1" />
<polyline points="492.5,198.7 610.6,230.6" fill="none" stroke="#6a6a62" stroke-width="2.6" />
<polyline points="492.5,198.7 610.6,230.6" fill="none" stroke="#f4f4ee" stroke-width="1.5" />
<polyline points="454.0,226.0 571.0,258.0" fill="none" stroke="#6a6a62" stroke-width="2.6" />
<polyline points="454.0,226.0 571.0,258.0" fill="none" stroke="#f4f4ee" stroke-width="1.5" />
<polyline points="414.5,266.0 533.0,298.0" fill="none" stroke="#6a6a62" stroke-width="2.6" />
<polyline points="414.5,266.0 533.0,298.0" fill="none" stroke="#f4f4ee" stroke-width="1.5" />
<polyline points="380.0,320.6 493.0,350.6" fill="none" stroke="#5a5a52" stroke-width="2.4" />
<polyline points="380.0,320.6 493.0,350.6" fill="none" stroke="#8c8c84" stroke-width="0.9" stroke-dasharray="1 1" />
<polygon points="360.8,348.1 362.4,345.5 364.0,342.8 365.7,340.1 367.3,337.4 368.9,334.8 370.5,332.1 372.1,329.5 373.7,326.8 375.3,324.2 377.0,321.6 378.6,318.9 380.2,316.3 381.9,313.7 383.6,311.1 385.2,308.5 386.9,305.9 388.6,303.3 390.3,300.8 392.1,298.2 393.8,295.6 395.6,293.1 397.3,290.6 399.1,288.0 400.9,285.5 402.7,283.0 404.6,280.5 406.4,278.1 408.3,275.6 410.2,273.1 412.1,270.7 414.1,268.3 416.0,265.9 418.0,263.5 420.0,261.1 422.0,258.8 424.1,256.4 426.1,254.1 428.2,251.8 430.3,249.6 432.5,247.3 434.6,245.1 436.8,242.9 439.0,240.7 441.3,238.6 443.5,236.5 445.8,234.4 448.1,232.3 450.5,230.3 452.8,228.3 455.2,226.4 457.6,224.4 460.0,222.6 462.5,220.7 465.0,218.9 467.5,217.1 470.1,215.4 472.6,213.7 475.2,212.0 477.8,210.4 480.5,208.9 483.1,207.4 485.8,205.9 488.5,204.5 491.3,203.2 494.0,201.9 496.8,200.6 499.6,199.5 502.5,198.3 505.3,197.3 508.2,196.3 511.1,195.3 514.1,194.5 517.0,193.6 520.0,192.9 523.0,192.2 526.0,191.7 529.0,191.1 532.1,190.7 535.2,190.3 538.3,190.0 537.9,185.1 534.7,185.4 531.5,185.7 528.3,186.2 525.1,186.7 522.0,187.4 518.8,188.0 515.8,188.8 512.7,189.6 509.7,190.6 506.6,191.5 503.7,192.6 500.7,193.7 497.8,194.8 494.8,196.1 492.0,197.3 489.1,198.7 486.3,200.1 483.5,201.5 480.7,203.0 478.0,204.6 475.3,206.2 472.6,207.8 469.9,209.5 467.3,211.2 464.7,213.0 462.1,214.8 459.5,216.7 457.0,218.6 454.5,220.5 452.1,222.5 449.6,224.5 447.2,226.5 444.8,228.6 442.5,230.7 440.1,232.8 437.8,235.0 435.5,237.2 433.3,239.4 431.1,241.6 428.9,243.9 426.7,246.2 424.5,248.5 422.4,250.8 420.3,253.1 418.2,255.5 416.2,257.9 414.2,260.3 412.2,262.7 410.2,265.1 408.2,267.6 406.3,270.1 404.4,272.5 402.5,275.0 400.6,277.5 398.7,280.1 396.9,282.6 395.1,285.1 393.2,287.7 391.5,290.2 389.7,292.8 387.9,295.4 386.2,298.0 384.5,300.6 382.8,303.2 381.1,305.8 379.4,308.4 377.7,311.0 376.0,313.6 374.4,316.3 372.7,318.9 371.1,321.6 369.4,324.2 367.8,326.9 366.2,329.5 364.6,332.2 363.0,334.9 361.4,337.5 359.8,340.2 358.2,342.9 356.5,345.6" fill="#5a8e6e" stroke="#2a4835" stroke-width="0.6" />
<polyline points="359.2,347.2 360.8,344.5 362.4,341.8 364.0,339.1 365.6,336.5 367.2,333.8 368.9,331.1 370.5,328.5 372.1,325.8 373.7,323.2 375.4,320.6 377.0,317.9 378.6,315.3 380.3,312.7 382.0,310.1 383.7,307.5 385.3,304.9 387.0,302.3 388.8,299.7 390.5,297.1 392.2,294.6 394.0,292.0 395.8,289.5 397.6,286.9 399.4,284.4 401.2,281.9 403.1,279.4 404.9,276.9 406.8,274.4 408.7,272.0 410.6,269.5 412.6,267.1 414.6,264.7 416.5,262.3 418.6,259.9 420.6,257.5 422.6,255.2 424.7,252.9 426.8,250.6 429.0,248.3 431.1,246.0 433.3,243.8 435.5,241.6 437.7,239.4 440.0,237.2 442.2,235.1 444.5,233.0 446.9,230.9 449.2,228.9 451.6,226.9 454.0,224.9 456.4,222.9 458.9,221.0 461.4,219.2 463.9,217.3 466.4,215.6 469.0,213.8 471.6,212.1 474.2,210.4 476.8,208.8 479.5,207.2 482.2,205.7 484.9,204.3 487.7,202.8 490.5,201.5 493.3,200.2 496.1,198.9 498.9,197.7 501.8,196.6 504.7,195.5 507.6,194.5 510.6,193.5 513.5,192.6 516.5,191.8 519.6,191.1 522.6,190.4 525.7,189.8 528.7,189.3 531.9,188.8 535.0,188.4 538.1,188.2" fill="none" stroke="#72a486" stroke-width="1.5" />
<polygon points="483.3,383.7 485.2,380.9 487.0,378.2 488.9,375.4 490.7,372.7 492.6,370.0 494.4,367.3 496.2,364.6 498.1,361.9 499.9,359.2 501.7,356.5 503.5,353.8 505.3,351.1 507.1,348.4 509.0,345.8 510.8,343.1 512.6,340.5 514.4,337.8 516.3,335.2 518.1,332.5 520.0,329.9 521.8,327.3 523.7,324.6 525.6,322.0 527.5,319.4 529.4,316.8 531.3,314.2 533.3,311.6 535.2,309.1 537.2,306.5 539.2,304.0 541.2,301.4 543.3,298.9 545.3,296.4 547.4,293.9 549.5,291.4 551.6,288.9 553.7,286.5 555.9,284.0 558.0,281.6 560.3,279.3 562.5,276.9 564.7,274.5 567.0,272.2 569.3,269.9 571.7,267.7 574.0,265.5 576.4,263.3 578.8,261.1 581.3,259.0 583.7,256.9 586.2,254.9 588.7,252.9 591.3,250.9 593.9,249.0 596.5,247.1 599.1,245.3 601.8,243.6 604.5,241.8 607.2,240.2 610.0,238.6 612.8,237.1 615.6,235.6 618.4,234.2 621.3,232.9 624.2,231.6 627.1,230.5 630.1,229.3 633.0,228.3 636.1,227.4 639.1,226.5 642.2,225.8 645.3,225.1 648.4,224.5 651.5,224.0 654.7,223.6 657.9,223.4 661.2,223.2 664.4,223.1 667.7,223.2 671.1,223.3 671.4,217.8 667.9,217.7 664.4,217.6 661.0,217.7 657.5,217.9 654.2,218.2 650.8,218.6 647.5,219.1 644.2,219.7 640.9,220.4 637.7,221.2 634.5,222.1 631.3,223.1 628.2,224.2 625.1,225.3 622.1,226.6 619.0,227.9 616.0,229.3 613.1,230.7 610.2,232.2 607.3,233.8 604.4,235.5 601.6,237.2 598.8,238.9 596.1,240.8 593.3,242.6 590.6,244.5 588.0,246.5 585.4,248.5 582.8,250.6 580.2,252.7 577.7,254.8 575.2,257.0 572.7,259.2 570.3,261.4 567.9,263.7 565.5,266.0 563.1,268.4 560.8,270.7 558.5,273.1 556.2,275.5 554.0,277.9 551.8,280.4 549.6,282.8 547.4,285.3 545.3,287.8 543.1,290.4 541.1,292.9 539.0,295.4 536.9,298.0 534.9,300.6 532.9,303.1 530.9,305.7 528.9,308.3 526.9,310.9 525.0,313.5 523.1,316.2 521.2,318.8 519.3,321.4 517.4,324.1 515.5,326.7 513.6,329.4 511.8,332.0 509.9,334.7 508.1,337.3 506.2,340.0 504.4,342.7 502.6,345.4 500.8,348.0 499.0,350.7 497.1,353.4 495.3,356.1 493.5,358.8 491.7,361.5 489.9,364.2 488.0,366.9 486.2,369.6 484.3,372.4 482.5,375.1 480.6,377.8 478.7,380.6" fill="#5a8e6e" stroke="#2a4835" stroke-width="0.6" />
<polyline points="481.6,382.5 483.4,379.8 485.3,377.0 487.2,374.3 489.0,371.5 490.9,368.8 492.7,366.1 494.5,363.4 496.3,360.7 498.2,358.0 500.0,355.3 501.8,352.6 503.6,349.9 505.4,347.3 507.2,344.6 509.1,341.9 510.9,339.3 512.7,336.6 514.6,334.0 516.4,331.3 518.3,328.7 520.1,326.1 522.0,323.4 523.9,320.8 525.8,318.2 527.7,315.6 529.7,313.0 531.6,310.4 533.6,307.8 535.6,305.2 537.6,302.7 539.6,300.1 541.6,297.6 543.7,295.0 545.8,292.5 547.9,290.0 550.0,287.6 552.1,285.1 554.3,282.7 556.5,280.2 558.7,277.8 561.0,275.4 563.2,273.1 565.5,270.8 567.9,268.5 570.2,266.2 572.6,263.9 575.0,261.7 577.4,259.5 579.9,257.4 582.4,255.3 584.9,253.2 587.5,251.2 590.0,249.2 592.6,247.3 595.3,245.4 598.0,243.6 600.7,241.8 603.4,240.1 606.1,238.4 608.9,236.8 611.8,235.2 614.6,233.7 617.5,232.3 620.4,231.0 623.4,229.7 626.3,228.5 629.4,227.4 632.4,226.3 635.5,225.4 638.6,224.5 641.7,223.7 644.9,223.0 648.0,222.4 651.3,221.9 654.5,221.6 657.8,221.3 661.1,221.1 664.4,221.0 667.8,221.1 671.2,221.2" fill="none" stroke="#72a486" stroke-width="1.65" />
<rect x="545.500" y="180.500" width="5" height="7.500" rx="1.500" fill="#b8e0c0" stroke="#4e7a5a" stroke-width=".6"/>
<rect x="668.500" y="214.500" width="5" height="7.500" rx="1.500" fill="#b8e0c0" stroke="#4e7a5a" stroke-width=".6"/>
<polygon points="538.0,190.8 548.0,190.8 548.0,187.2 538.0,187.2" fill="#7aa888" stroke="#4e7a5a" stroke-width="0.7" />
<polyline points="538.0,189.3 548.0,189.3" fill="none" stroke="#e6fbe8" stroke-width="1.05" />
<polygon points="674.0,225.5 742.0,224.0 742.0,221.0 674.0,222.5" fill="#c4ecca" stroke="#4e7a5a" stroke-width="0.7" />
<polyline points="674.0,224.3 742.0,222.8" fill="none" stroke="#e6fbe8" stroke-width="0.8999999999999999" />
<polygon points="704.0,236.9 722.0,236.4 722.0,233.6 704.0,234.1" fill="#d4f2d8" stroke="#4e7a5a" stroke-width="0.5" />
<polyline points="704.0,235.8 722.0,235.3" fill="none" stroke="#e6fbe8" stroke-width="0.84" />
<polyline points="722.0,235.0 685.0,246.5" fill="none" stroke="#8aa894" stroke-width="0.8" />
<polyline points="719.0,235.0 691.0,246.5" fill="none" stroke="#c8d8cc" stroke-width="0.7" />
<polygon points="685.0,247.9 701.0,247.4 701.0,244.6 685.0,245.1" fill="#d4f2d8" stroke="#4e7a5a" stroke-width="0.5" />
<polyline points="685.0,246.8 701.0,246.3" fill="none" stroke="#e6fbe8" stroke-width="0.84" />
<polyline points="701.0,246.0 664.0,261.5" fill="none" stroke="#8aa894" stroke-width="0.8" />
<polyline points="698.0,246.0 670.0,261.5" fill="none" stroke="#c8d8cc" stroke-width="0.7" />
<polygon points="664.0,262.9 682.0,262.4 682.0,259.6 664.0,260.1" fill="#d4f2d8" stroke="#4e7a5a" stroke-width="0.5" />
<polyline points="664.0,261.8 682.0,261.3" fill="none" stroke="#e6fbe8" stroke-width="0.84" />
<polyline points="682.0,261.0 644.0,279.0" fill="none" stroke="#8aa894" stroke-width="0.8" />
<polyline points="679.0,261.0 650.0,279.0" fill="none" stroke="#c8d8cc" stroke-width="0.7" />
<polygon points="644.0,280.4 666.0,279.9 666.0,277.1 644.0,277.6" fill="#d4f2d8" stroke="#4e7a5a" stroke-width="0.5" />
<polyline points="644.0,279.3 666.0,278.8" fill="none" stroke="#e6fbe8" stroke-width="0.84" />
<polyline points="666.0,278.5 626.0,300.5" fill="none" stroke="#8aa894" stroke-width="0.8" />
<polyline points="663.0,278.5 632.0,300.5" fill="none" stroke="#c8d8cc" stroke-width="0.7" />
<polygon points="626.0,301.9 648.0,301.4 648.0,298.6 626.0,299.1" fill="#d4f2d8" stroke="#4e7a5a" stroke-width="0.5" />
<polyline points="626.0,300.8 648.0,300.3" fill="none" stroke="#e6fbe8" stroke-width="0.84" />
<polyline points="648.0,300.0 606.0,326.5" fill="none" stroke="#8aa894" stroke-width="0.8" />
<polyline points="645.0,300.0 612.0,326.5" fill="none" stroke="#c8d8cc" stroke-width="0.7" />
<polygon points="606.0,327.9 630.0,327.4 630.0,324.6 606.0,325.1" fill="#d4f2d8" stroke="#4e7a5a" stroke-width="0.5" />
<polyline points="606.0,326.8 630.0,326.3" fill="none" stroke="#e6fbe8" stroke-width="0.84" />
<polyline points="630.0,326.0 586.0,354.5" fill="none" stroke="#8aa894" stroke-width="0.8" />
<polyline points="627.0,326.0 592.0,354.5" fill="none" stroke="#c8d8cc" stroke-width="0.7" />
<polygon points="586.0,355.9 611.0,355.4 611.0,352.6 586.0,353.1" fill="#d4f2d8" stroke="#4e7a5a" stroke-width="0.5" />
<polyline points="586.0,354.8 611.0,354.3" fill="none" stroke="#e6fbe8" stroke-width="0.84" />
<polyline points="611.0,354.0 572.0,384.0" fill="none" stroke="#e8f4ea" stroke-width="0.9" />
<polyline points="569.9,382.5 571.3,380.0 572.6,377.6 574.0,375.2 575.4,372.8 576.8,370.4 578.2,368.0 579.6,365.6 581.1,363.3 582.6,360.9 584.0,358.6 585.5,356.2 587.0,353.9 588.5,351.6 590.0,349.3 591.6,347.0 593.1,344.7 594.7,342.4 596.2,340.2 597.8,337.9 599.4,335.7 601.0,333.4 602.6,331.2 604.2,328.9 605.8,326.7 607.5,324.5 609.1,322.3 610.8,320.1 612.5,317.9 614.2,315.7 615.9,313.5 617.6,311.3 619.3,309.2 621.0,307.0 622.8,304.8 624.5,302.7 626.3,300.6 628.1,298.4 629.9,296.3 631.7,294.2 633.5,292.1 635.3,290.0 637.1,288.0 639.0,285.9 640.9,283.9 642.7,281.8 644.6,279.8 646.5,277.8 648.5,275.8 650.4,273.8 652.4,271.9 654.3,269.9 656.3,268.0 658.3,266.1 660.3,264.2 662.4,262.3 664.4,260.5 666.5,258.7 668.6,256.8 670.7,255.1 672.8,253.3 674.9,251.6 677.1,249.9 679.3,248.2 681.5,246.5 683.7,244.9 685.9,243.3 688.2,241.8 690.5,240.2 692.8,238.7 695.1,237.3 697.5,235.8 699.9,234.5 702.3,233.1 704.8,231.8 707.2,230.5 709.7,229.3 712.3,228.1 714.8,227.0 717.4,225.9 720.0,224.9" fill="none" stroke="#4e7a5a" stroke-width="1.3" />
<polygon points="596.9,386.4 598.8,383.6 600.7,380.8 602.6,378.0 604.4,375.2 606.3,372.3 608.0,369.5 609.8,366.7 611.6,363.9 613.3,361.0 615.1,358.2 616.8,355.4 618.5,352.5 620.2,349.7 621.9,346.8 623.6,344.0 625.3,341.2 627.0,338.3 628.8,335.5 630.5,332.7 632.2,329.8 634.0,327.0 635.7,324.2 637.5,321.4 639.2,318.6 641.0,315.8 642.9,313.0 644.7,310.2 646.5,307.5 648.4,304.7 650.3,302.0 652.2,299.3 654.2,296.6 656.1,293.9 658.1,291.2 660.1,288.6 662.2,286.0 664.3,283.4 666.4,280.8 668.5,278.3 670.7,275.8 672.9,273.3 675.1,270.9 677.4,268.5 679.7,266.1 682.0,263.8 684.4,261.5 686.8,259.3 689.2,257.1 691.7,254.9 694.2,252.8 696.8,250.8 699.4,248.8 702.0,246.9 704.6,245.0 707.3,243.2 710.0,241.5 712.8,239.8 715.6,238.2 718.4,236.6 721.3,235.2 724.2,233.8 727.1,232.5 730.1,231.2 733.1,230.1 736.1,229.0 739.1,228.1 742.2,227.2 745.3,226.4 748.5,225.7 751.6,225.1 754.8,224.7 758.1,224.3 761.3,224.0 764.6,223.9 767.9,223.9 771.2,224.0 774.6,224.2 777.9,224.5 781.3,225.0 784.8,225.6 785.8,220.2 782.2,219.6 778.6,219.1 775.0,218.7 771.5,218.5 768.0,218.4 764.5,218.4 761.0,218.6 757.5,218.8 754.1,219.2 750.7,219.7 747.4,220.3 744.1,221.0 740.8,221.9 737.6,222.8 734.3,223.8 731.2,224.9 728.0,226.1 724.9,227.4 721.9,228.8 718.8,230.2 715.9,231.8 712.9,233.4 710.0,235.0 707.1,236.8 704.3,238.6 701.5,240.5 698.8,242.4 696.1,244.4 693.4,246.5 690.8,248.6 688.2,250.8 685.6,253.0 683.1,255.2 680.6,257.5 678.2,259.9 675.8,262.3 673.4,264.7 671.1,267.1 668.8,269.6 666.6,272.2 664.3,274.7 662.1,277.3 660.0,279.9 657.9,282.6 655.8,285.2 653.7,287.9 651.7,290.6 649.7,293.3 647.7,296.1 645.8,298.8 643.9,301.6 642.0,304.4 640.1,307.2 638.3,310.0 636.4,312.8 634.6,315.6 632.8,318.4 631.0,321.3 629.3,324.1 627.5,326.9 625.8,329.8 624.1,332.6 622.3,335.5 620.6,338.3 618.9,341.2 617.2,344.0 615.5,346.8 613.8,349.7 612.1,352.5 610.4,355.3 608.6,358.1 606.9,361.0 605.2,363.8 603.4,366.6 601.6,369.4 599.8,372.2 598.0,375.0 596.2,377.7 594.3,380.5 592.4,383.3" fill="#639874" stroke="#2a4835" stroke-width="0.6" />
<polyline points="595.2,385.2 597.1,382.4 599.0,379.6 600.9,376.8 602.7,374.0 604.5,371.2 606.3,368.4 608.1,365.6 609.8,362.8 611.5,359.9 613.3,357.1 615.0,354.3 616.7,351.4 618.4,348.6 620.1,345.8 621.8,342.9 623.5,340.1 625.3,337.2 627.0,334.4 628.7,331.6 630.4,328.7 632.2,325.9 633.9,323.1 635.7,320.3 637.5,317.4 639.3,314.6 641.1,311.9 642.9,309.1 644.8,306.3 646.7,303.5 648.6,300.8 650.5,298.1 652.5,295.3 654.4,292.6 656.4,290.0 658.5,287.3 660.5,284.7 662.6,282.1 664.8,279.5 666.9,276.9 669.1,274.4 671.3,271.9 673.6,269.5 675.9,267.0 678.2,264.7 680.6,262.3 683.0,260.0 685.4,257.7 687.9,255.5 690.4,253.4 692.9,251.2 695.5,249.2 698.1,247.1 700.8,245.2 703.4,243.3 706.2,241.5 708.9,239.7 711.7,238.0 714.6,236.3 717.4,234.8 720.4,233.3 723.3,231.9 726.3,230.5 729.3,229.3 732.3,228.1 735.4,227.0 738.5,226.1 741.7,225.2 744.9,224.4 748.1,223.7 751.3,223.1 754.6,222.6 757.9,222.2 761.2,222.0 764.5,221.8 767.9,221.8 771.3,221.9 774.8,222.1 778.2,222.5 781.7,222.9 785.2,223.6" fill="none" stroke="#86b496" stroke-width="1.65" />
<polygon points="360.5,357.4 478.5,387.4 479.5,383.6 361.5,353.6" fill="#c4ecca" stroke="#4e7a5a" stroke-width="0.7" />
<polyline points="360.9,355.9 478.9,385.9" fill="none" stroke="#e6fbe8" stroke-width="1.2" />
<polygon points="483.0,389.5 592.0,387.5 592.0,382.5 483.0,384.5" fill="#c4ecca" stroke="#4e7a5a" stroke-width="0.7" />
<polyline points="483.0,387.5 592.0,385.5" fill="none" stroke="#e6fbe8" stroke-width="1.5" />
<polygon points="563.8,384.8 488.8,516.8 493.2,519.2 568.2,387.2" fill="#c4ecca" stroke="#4e7a5a" stroke-width="0.7" />
<polyline points="565.6,385.8 490.6,517.8" fill="none" stroke="#e6fbe8" stroke-width="1.5" />
<rect x="355.600" y="343" width="5.800" height="139.500" fill="url(#gcol)" stroke="#4e7a5a" stroke-width=".6"/>
<rect x="478.700" y="378" width="5.800" height="137" fill="url(#gcol)" stroke="#4e7a5a" stroke-width=".6"/>
<circle cx="358.500" cy="345.500" r="2.200" fill="#d0f0d4" stroke="#4e7a5a" stroke-width=".5"/><circle cx="481.600" cy="380.500" r="2.200" fill="#d0f0d4" stroke="#4e7a5a" stroke-width=".5"/>
<path d="M182 598.500l-7 7" stroke="#e03030" stroke-width=".9"/><path d="M182 598.500l18 5.500" stroke="#30a848" stroke-width=".9"/><path d="M182 598.500v-10" stroke="#3050e0" stroke-width=".9"/>
<text x="173" y="609" font-family="'Liberation Sans',sans-serif" font-size="5.500" fill="#e03030">X</text><text x="199.500" y="609" font-family="'Liberation Sans',sans-serif" font-size="5.500" fill="#30a848">Y</text><text x="178" y="590" font-family="'Liberation Sans',sans-serif" font-size="5.500" fill="#3050e0">Z</text>
</g>
</svg>
</div>
</body></html>
